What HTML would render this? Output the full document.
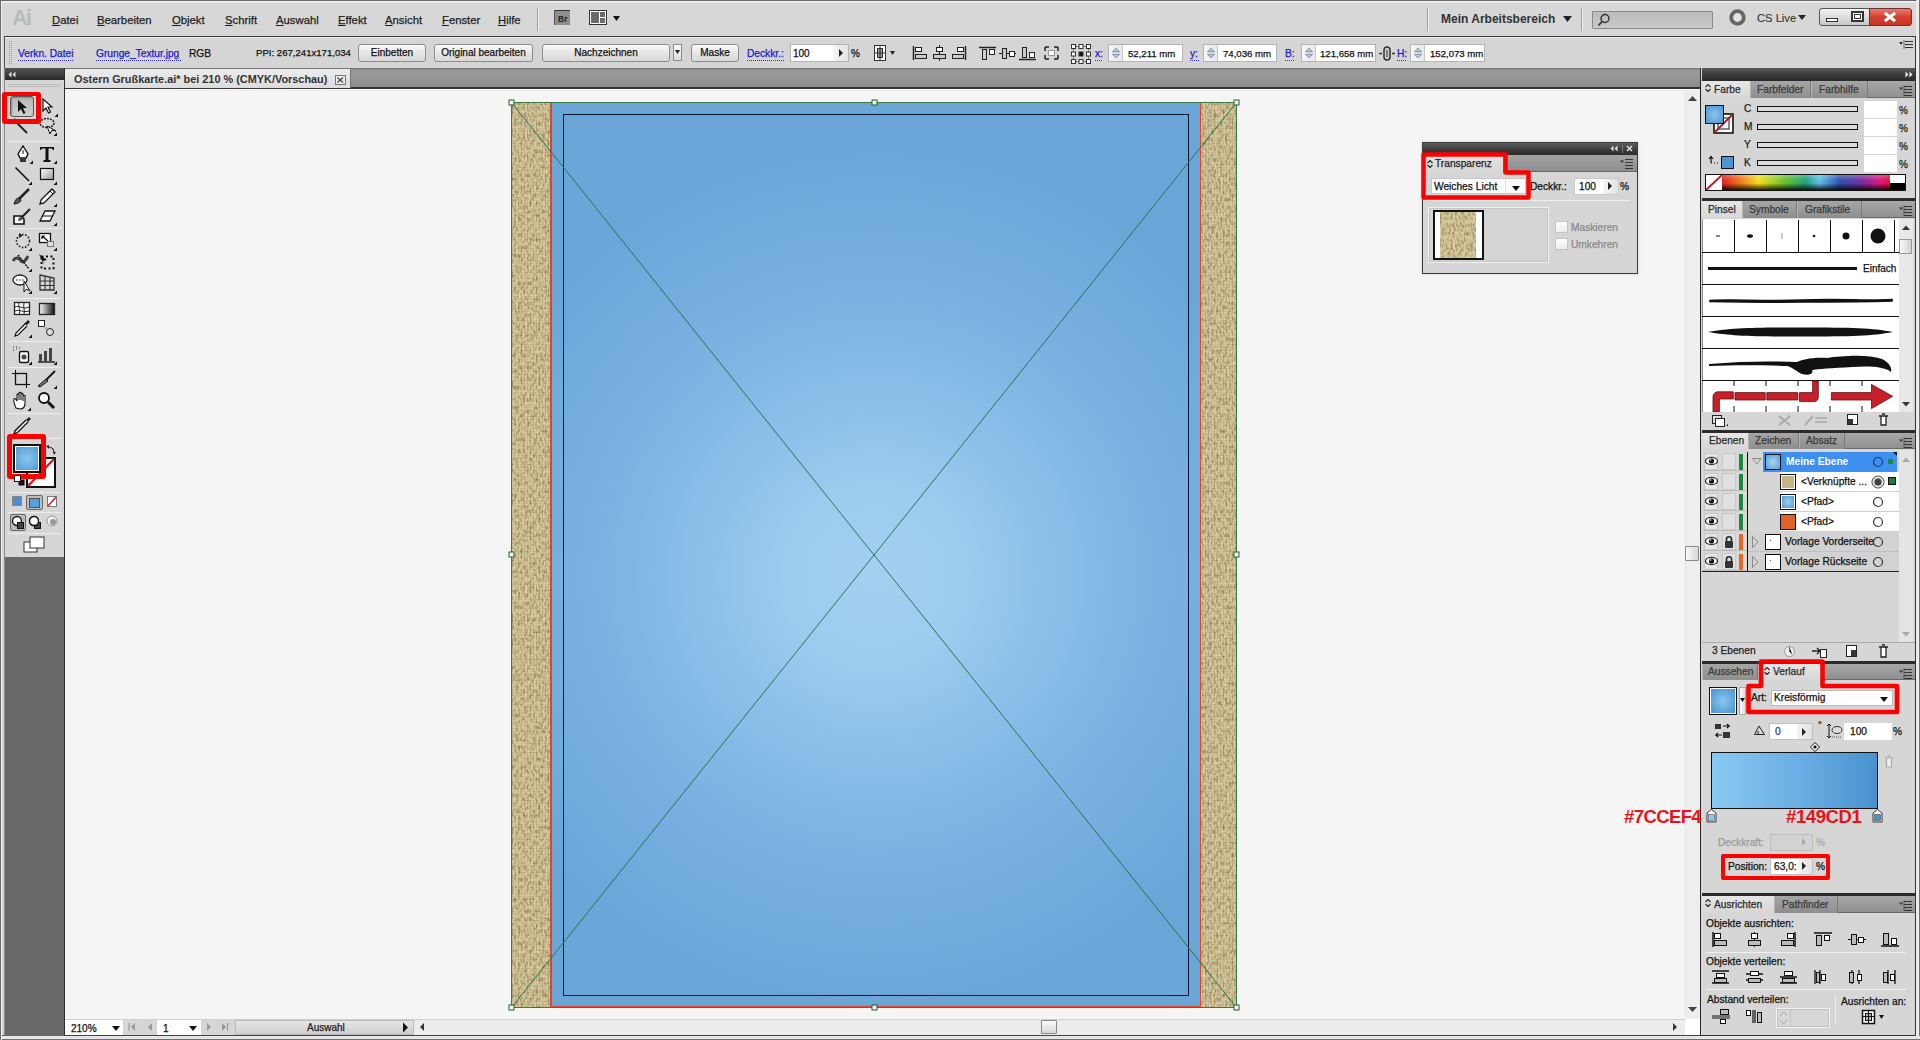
<!DOCTYPE html>
<html><head><meta charset="utf-8">
<style>
*{box-sizing:border-box;margin:0;padding:0}
html,body{width:1920px;height:1040px;overflow:hidden;background:#d6d6d6;font-family:"Liberation Sans",sans-serif;font-size:10px;color:#222}
.a{position:absolute}
.t{position:absolute;white-space:nowrap;line-height:1;-webkit-text-stroke:0.25px currentColor}
</style></head><body>

<div class="a" style="left:0px;top:0px;width:1920px;height:1040px;background:#d6d6d6"></div>
<div class="a" style="left:0px;top:0px;width:1px;height:1040px;background:#6a6a6a"></div>
<div class="a" style="left:1px;top:1px;width:1px;height:1039px;background:#f2f2f2"></div>
<div class="a" style="left:0px;top:0px;width:1920px;height:1px;background:#6a6a6a"></div>
<div class="a" style="left:1915px;top:0px;width:5px;height:1040px;background:#ececec;border-left:1px solid #333;border-right:1px solid #707070"></div>
<div class="a" style="left:2px;top:1px;width:1914px;height:35px;background:linear-gradient(#f2f2f2 0,#f2f2f2 1px,#d8d8d8 2px,#d6d6d6)"></div>
<div class="a" style="left:4px;top:36px;width:1912px;height:1px;background:#3c3c3c"></div>
<div class="a" style="left:4px;top:37px;width:1911px;height:31px;background:#d5d5d5;border-left:1px solid #555"></div>
<div class="a" style="left:5px;top:37px;width:1907px;height:1px;background:#f0f0f0"></div>
<svg class="a" style="left:9px;top:41px;" width="4" height="24" viewBox="0 0 4 24"><rect x="0" y="0" width="1" height="1" fill="#999"/><rect x="2" y="0" width="1" height="1" fill="#999"/><rect x="0" y="2" width="1" height="1" fill="#999"/><rect x="2" y="2" width="1" height="1" fill="#999"/><rect x="0" y="4" width="1" height="1" fill="#999"/><rect x="2" y="4" width="1" height="1" fill="#999"/><rect x="0" y="6" width="1" height="1" fill="#999"/><rect x="2" y="6" width="1" height="1" fill="#999"/><rect x="0" y="8" width="1" height="1" fill="#999"/><rect x="2" y="8" width="1" height="1" fill="#999"/><rect x="0" y="10" width="1" height="1" fill="#999"/><rect x="2" y="10" width="1" height="1" fill="#999"/><rect x="0" y="12" width="1" height="1" fill="#999"/><rect x="2" y="12" width="1" height="1" fill="#999"/><rect x="0" y="14" width="1" height="1" fill="#999"/><rect x="2" y="14" width="1" height="1" fill="#999"/><rect x="0" y="16" width="1" height="1" fill="#999"/><rect x="2" y="16" width="1" height="1" fill="#999"/><rect x="0" y="18" width="1" height="1" fill="#999"/><rect x="2" y="18" width="1" height="1" fill="#999"/><rect x="0" y="20" width="1" height="1" fill="#999"/><rect x="2" y="20" width="1" height="1" fill="#999"/><rect x="0" y="22" width="1" height="1" fill="#999"/><rect x="2" y="22" width="1" height="1" fill="#999"/></svg>
<div class="t" style="left:12px;top:8px;font-size:21.5px;color:#bababa;font-weight:bold;-webkit-text-stroke:0;letter-spacing:-1.5px;-webkit-text-stroke:0">Ai</div>
<div class="t" style="left:52px;top:15px;font-size:11.3px;color:#1e1e1e;font-weight:normal;"><u>D</u>atei</div>
<div class="t" style="left:97px;top:15px;font-size:11.3px;color:#1e1e1e;font-weight:normal;"><u>B</u>earbeiten</div>
<div class="t" style="left:172px;top:15px;font-size:11.3px;color:#1e1e1e;font-weight:normal;"><u>O</u>bjekt</div>
<div class="t" style="left:225px;top:15px;font-size:11.3px;color:#1e1e1e;font-weight:normal;"><u>S</u>chrift</div>
<div class="t" style="left:276px;top:15px;font-size:11.3px;color:#1e1e1e;font-weight:normal;"><u>A</u>uswahl</div>
<div class="t" style="left:338px;top:15px;font-size:11.3px;color:#1e1e1e;font-weight:normal;"><u>E</u>ffekt</div>
<div class="t" style="left:385px;top:15px;font-size:11.3px;color:#1e1e1e;font-weight:normal;"><u>A</u>nsicht</div>
<div class="t" style="left:442px;top:15px;font-size:11.3px;color:#1e1e1e;font-weight:normal;"><u>F</u>enster</div>
<div class="t" style="left:498px;top:15px;font-size:11.3px;color:#1e1e1e;font-weight:normal;"><u>H</u>ilfe</div>
<div class="a" style="left:537px;top:8px;width:2px;height:23px;background:#a0a0a0;border-right:1px solid #f0f0f0"></div>
<div class="a" style="left:554px;top:10px;width:16px;height:15px;background:#8e8e8e;border-top:1px solid #333;border-left:1px solid #555"></div>
<div class="t" style="left:558px;top:15px;font-size:8.5px;color:#222;font-weight:bold;-webkit-text-stroke:0;">Br</div>
<div class="a" style="left:589px;top:10px;width:18px;height:15px;background:#fff;border:1px solid #333"></div>
<div class="a" style="left:591px;top:12px;width:8px;height:11px;background:#6a6a6a"></div>
<div class="a" style="left:600px;top:12px;width:5px;height:5px;background:#6a6a6a"></div>
<div class="a" style="left:600px;top:18px;width:5px;height:5px;background:#6a6a6a"></div>
<svg class="a" style="left:613px;top:16px;" width="8" height="6" viewBox="0 0 8 6"><path d="M0 0H7L3.5 5Z" fill="#111"/></svg>
<div class="a" style="left:1427px;top:8px;width:2px;height:23px;background:#a0a0a0;border-right:1px solid #f0f0f0"></div>
<div class="t" style="left:1441px;top:13px;font-size:12px;color:#333;font-weight:bold;-webkit-text-stroke:0;">Mein Arbeitsbereich</div>
<svg class="a" style="left:1563px;top:16px;" width="9" height="6" viewBox="0 0 9 6"><path d="M0 0H9L4.5 6Z" fill="#222"/></svg>
<div class="a" style="left:1581px;top:8px;width:2px;height:23px;background:#a0a0a0;border-right:1px solid #f0f0f0"></div>
<div class="a" style="left:1592px;top:11px;width:121px;height:18px;background:linear-gradient(#bcbcbc,#c8c8c8);border:1px solid #8a8a8a;border-radius:1px"></div>
<svg class="a" style="left:1597px;top:13px;" width="14" height="14" viewBox="0 0 14 14"><circle cx="8" cy="5.5" r="4" stroke="#333" stroke-width="1.4" fill="none"/><path d="M5 8.5L1.5 12.5" stroke="#333" stroke-width="1.8"/></svg>
<svg class="a" style="left:1728px;top:8px;" width="20" height="20" viewBox="0 0 20 20"><circle cx="9.5" cy="9.5" r="6.3" stroke="#666" stroke-width="3.8" fill="#e4e4e4"/></svg>
<div class="t" style="left:1757px;top:13px;font-size:11.2px;color:#333;font-weight:normal;-webkit-text-stroke:0.1px #333">CS Live</div>
<svg class="a" style="left:1798px;top:15px;" width="9" height="6" viewBox="0 0 9 6"><path d="M0 0H8L4 5Z" fill="#222"/></svg>
<div class="a" style="left:1819px;top:8px;width:26px;height:18px;background:linear-gradient(#f2f2f2,#c8c8c8);border:1px solid #555;border-radius:3px 0 0 3px"></div>
<div class="a" style="left:1826px;top:18px;width:12px;height:4px;background:#fff;border:1px solid #333"></div>
<div class="a" style="left:1844px;top:8px;width:26px;height:18px;background:linear-gradient(#f2f2f2,#c8c8c8);border:1px solid #555;border-left:none"></div>
<div class="a" style="left:1851px;top:11px;width:13px;height:11px;background:#fff;border:2px solid #333"></div>
<div class="a" style="left:1854px;top:14px;width:7px;height:5px;background:#fff;border:1.5px solid #333"></div>
<div class="a" style="left:1869px;top:8px;width:43px;height:18px;background:linear-gradient(#e87a6e,#d44030 50%,#c53525);border:1px solid #6a3030;border-radius:0 3px 3px 0"></div>
<svg class="a" style="left:1883px;top:11px;" width="14" height="12" viewBox="0 0 14 12"><path d="M2 2L12 10M12 2L2 10" stroke="#fff" stroke-width="3"/><path d="M2 2L12 10M12 2L2 10" stroke="#fff" stroke-width="2.2"/></svg>
<div class="t" style="left:18px;top:49px;font-size:10.2px;color:#1a1acc;font-weight:normal;">Verkn. Datei</div>
<svg class="a" style="left:18px;top:60px;" width="55" height="1" viewBox="0 0 55 1"><rect x="0" y="0" width="1" height="1" fill="#3333cc"/><rect x="2" y="0" width="1" height="1" fill="#3333cc"/><rect x="4" y="0" width="1" height="1" fill="#3333cc"/><rect x="6" y="0" width="1" height="1" fill="#3333cc"/><rect x="8" y="0" width="1" height="1" fill="#3333cc"/><rect x="10" y="0" width="1" height="1" fill="#3333cc"/><rect x="12" y="0" width="1" height="1" fill="#3333cc"/><rect x="14" y="0" width="1" height="1" fill="#3333cc"/><rect x="16" y="0" width="1" height="1" fill="#3333cc"/><rect x="18" y="0" width="1" height="1" fill="#3333cc"/><rect x="20" y="0" width="1" height="1" fill="#3333cc"/><rect x="22" y="0" width="1" height="1" fill="#3333cc"/><rect x="24" y="0" width="1" height="1" fill="#3333cc"/><rect x="26" y="0" width="1" height="1" fill="#3333cc"/><rect x="28" y="0" width="1" height="1" fill="#3333cc"/><rect x="30" y="0" width="1" height="1" fill="#3333cc"/><rect x="32" y="0" width="1" height="1" fill="#3333cc"/><rect x="34" y="0" width="1" height="1" fill="#3333cc"/><rect x="36" y="0" width="1" height="1" fill="#3333cc"/><rect x="38" y="0" width="1" height="1" fill="#3333cc"/><rect x="40" y="0" width="1" height="1" fill="#3333cc"/><rect x="42" y="0" width="1" height="1" fill="#3333cc"/><rect x="44" y="0" width="1" height="1" fill="#3333cc"/><rect x="46" y="0" width="1" height="1" fill="#3333cc"/><rect x="48" y="0" width="1" height="1" fill="#3333cc"/><rect x="50" y="0" width="1" height="1" fill="#3333cc"/><rect x="52" y="0" width="1" height="1" fill="#3333cc"/><rect x="54" y="0" width="1" height="1" fill="#3333cc"/></svg>
<div class="t" style="left:96px;top:49px;font-size:10.2px;color:#1a1acc;font-weight:normal;">Grunge_Textur.jpg</div>
<svg class="a" style="left:96px;top:60px;" width="86" height="1" viewBox="0 0 86 1"><rect x="0" y="0" width="1" height="1" fill="#3333cc"/><rect x="2" y="0" width="1" height="1" fill="#3333cc"/><rect x="4" y="0" width="1" height="1" fill="#3333cc"/><rect x="6" y="0" width="1" height="1" fill="#3333cc"/><rect x="8" y="0" width="1" height="1" fill="#3333cc"/><rect x="10" y="0" width="1" height="1" fill="#3333cc"/><rect x="12" y="0" width="1" height="1" fill="#3333cc"/><rect x="14" y="0" width="1" height="1" fill="#3333cc"/><rect x="16" y="0" width="1" height="1" fill="#3333cc"/><rect x="18" y="0" width="1" height="1" fill="#3333cc"/><rect x="20" y="0" width="1" height="1" fill="#3333cc"/><rect x="22" y="0" width="1" height="1" fill="#3333cc"/><rect x="24" y="0" width="1" height="1" fill="#3333cc"/><rect x="26" y="0" width="1" height="1" fill="#3333cc"/><rect x="28" y="0" width="1" height="1" fill="#3333cc"/><rect x="30" y="0" width="1" height="1" fill="#3333cc"/><rect x="32" y="0" width="1" height="1" fill="#3333cc"/><rect x="34" y="0" width="1" height="1" fill="#3333cc"/><rect x="36" y="0" width="1" height="1" fill="#3333cc"/><rect x="38" y="0" width="1" height="1" fill="#3333cc"/><rect x="40" y="0" width="1" height="1" fill="#3333cc"/><rect x="42" y="0" width="1" height="1" fill="#3333cc"/><rect x="44" y="0" width="1" height="1" fill="#3333cc"/><rect x="46" y="0" width="1" height="1" fill="#3333cc"/><rect x="48" y="0" width="1" height="1" fill="#3333cc"/><rect x="50" y="0" width="1" height="1" fill="#3333cc"/><rect x="52" y="0" width="1" height="1" fill="#3333cc"/><rect x="54" y="0" width="1" height="1" fill="#3333cc"/><rect x="56" y="0" width="1" height="1" fill="#3333cc"/><rect x="58" y="0" width="1" height="1" fill="#3333cc"/><rect x="60" y="0" width="1" height="1" fill="#3333cc"/><rect x="62" y="0" width="1" height="1" fill="#3333cc"/><rect x="64" y="0" width="1" height="1" fill="#3333cc"/><rect x="66" y="0" width="1" height="1" fill="#3333cc"/><rect x="68" y="0" width="1" height="1" fill="#3333cc"/><rect x="70" y="0" width="1" height="1" fill="#3333cc"/><rect x="72" y="0" width="1" height="1" fill="#3333cc"/><rect x="74" y="0" width="1" height="1" fill="#3333cc"/><rect x="76" y="0" width="1" height="1" fill="#3333cc"/><rect x="78" y="0" width="1" height="1" fill="#3333cc"/><rect x="80" y="0" width="1" height="1" fill="#3333cc"/><rect x="82" y="0" width="1" height="1" fill="#3333cc"/><rect x="84" y="0" width="1" height="1" fill="#3333cc"/></svg>
<div class="t" style="left:189px;top:49px;font-size:10.2px;color:#111;font-weight:normal;">RGB</div>
<div class="t" style="left:256px;top:48px;font-size:9.6px;color:#111;font-weight:normal;">PPI: 267,241x171,034</div>
<div class="a" style="left:358px;top:44px;width:68px;height:18px;background:linear-gradient(#fbfbfb,#e6e6e6 50%,#d9d9d9);border:1px solid #8c8c8c;border-radius:3px"></div>
<div class="t" style="left:358px;top:44px;width:68px;height:18px;line-height:18px;text-align:center;font-size:10px;color:#111">Einbetten</div>
<div class="a" style="left:434px;top:44px;width:99px;height:18px;background:linear-gradient(#fbfbfb,#e6e6e6 50%,#d9d9d9);border:1px solid #8c8c8c;border-radius:3px"></div>
<div class="t" style="left:434px;top:44px;width:99px;height:18px;line-height:18px;text-align:center;font-size:10px;color:#111">Original bearbeiten</div>
<div class="a" style="left:542px;top:44px;width:128px;height:18px;background:linear-gradient(#fbfbfb,#e6e6e6 50%,#d9d9d9);border:1px solid #8c8c8c;border-radius:3px"></div>
<div class="t" style="left:542px;top:44px;width:128px;height:18px;line-height:18px;text-align:center;font-size:10px;color:#111">Nachzeichnen</div>
<div class="a" style="left:673px;top:44px;width:9px;height:17px;background:linear-gradient(#fafafa,#dcdcdc);border:1px solid #8c8c8c"></div>
<svg class="a" style="left:675px;top:50px;" width="6" height="5" viewBox="0 0 6 5"><path d="M0 0H5L2.5 4Z" fill="#222"/></svg>
<div class="a" style="left:691px;top:44px;width:48px;height:18px;background:linear-gradient(#fbfbfb,#e6e6e6 50%,#d9d9d9);border:1px solid #8c8c8c;border-radius:3px"></div>
<div class="t" style="left:691px;top:44px;width:48px;height:18px;line-height:18px;text-align:center;font-size:10px;color:#111">Maske</div>
<div class="t" style="left:747px;top:49px;font-size:10.2px;color:#1a1acc;font-weight:normal;">Deckkr.:</div>
<svg class="a" style="left:747px;top:60px;" width="38" height="1" viewBox="0 0 38 1"><rect x="0" y="0" width="1" height="1" fill="#3333cc"/><rect x="2" y="0" width="1" height="1" fill="#3333cc"/><rect x="4" y="0" width="1" height="1" fill="#3333cc"/><rect x="6" y="0" width="1" height="1" fill="#3333cc"/><rect x="8" y="0" width="1" height="1" fill="#3333cc"/><rect x="10" y="0" width="1" height="1" fill="#3333cc"/><rect x="12" y="0" width="1" height="1" fill="#3333cc"/><rect x="14" y="0" width="1" height="1" fill="#3333cc"/><rect x="16" y="0" width="1" height="1" fill="#3333cc"/><rect x="18" y="0" width="1" height="1" fill="#3333cc"/><rect x="20" y="0" width="1" height="1" fill="#3333cc"/><rect x="22" y="0" width="1" height="1" fill="#3333cc"/><rect x="24" y="0" width="1" height="1" fill="#3333cc"/><rect x="26" y="0" width="1" height="1" fill="#3333cc"/><rect x="28" y="0" width="1" height="1" fill="#3333cc"/><rect x="30" y="0" width="1" height="1" fill="#3333cc"/><rect x="32" y="0" width="1" height="1" fill="#3333cc"/><rect x="34" y="0" width="1" height="1" fill="#3333cc"/><rect x="36" y="0" width="1" height="1" fill="#3333cc"/></svg>
<div class="a" style="left:790px;top:44px;width:59px;height:18px;background:#fff;border:1px solid #b4b4b4"></div>
<div class="a" style="left:833px;top:45px;width:15px;height:16px;background:linear-gradient(90deg,#f4f4f4,#e4e4e4)"></div>
<svg class="a" style="left:839px;top:49px;" width="5" height="8" viewBox="0 0 5 8"><path d="M0 0L4 4L0 8Z" fill="#222"/></svg>
<div class="t" style="left:793px;top:49px;font-size:10px;color:#111;font-weight:normal;">100</div>
<div class="t" style="left:851px;top:49px;font-size:10px;color:#111;font-weight:normal;">%</div>
<svg class="a" style="left:873px;top:44px;" width="22" height="18" viewBox="0 0 22 18"><rect x="1.5" y="1.5" width="11" height="15" fill="#fff" stroke="#333"/><rect x="4.5" y="4.5" width="5" height="9" fill="#999" stroke="#333"/><path d="M1 9H13M7 1V17" stroke="#333"/><path d="M17 7H22L19.5 11Z" fill="#222"/></svg>
<svg class="a" style="left:912px;top:45px;" width="17" height="16" viewBox="0 0 17 16"><path d="M1.5 1V15" stroke="#222" stroke-width="1.5"/><rect x="3.5" y="2.5" width="6" height="4" fill="#fff" stroke="#222"/><rect x="3.5" y="9.5" width="11" height="4" fill="#ccc" stroke="#222"/></svg>
<svg class="a" style="left:932px;top:45px;" width="17" height="16" viewBox="0 0 17 16"><path d="M7.5 0V16" stroke="#222"/><rect x="4.5" y="2.5" width="6" height="4" fill="#fff" stroke="#222"/><rect x="1.5" y="9.5" width="12" height="4" fill="#ccc" stroke="#222"/></svg>
<svg class="a" style="left:952px;top:45px;" width="17" height="16" viewBox="0 0 17 16"><path d="M13.5 1V15" stroke="#222" stroke-width="1.5"/><rect x="5.5" y="2.5" width="6" height="4" fill="#fff" stroke="#222"/><rect x="0.5" y="9.5" width="11" height="4" fill="#ccc" stroke="#222"/></svg>
<svg class="a" style="left:979px;top:45px;" width="17" height="16" viewBox="0 0 17 16"><path d="M0 2.5H17" stroke="#222" stroke-width="1.5"/><rect x="3.5" y="4.5" width="4" height="10" fill="#ccc" stroke="#222"/><rect x="10.5" y="4.5" width="5" height="5" fill="#fff" stroke="#222"/></svg>
<svg class="a" style="left:999px;top:45px;" width="17" height="16" viewBox="0 0 17 16"><path d="M0 8.5H17" stroke="#222"/><rect x="3.5" y="3.5" width="4" height="10" fill="#ccc" stroke="#222"/><rect x="10.5" y="6.5" width="5" height="5" fill="#fff" stroke="#222"/></svg>
<svg class="a" style="left:1019px;top:45px;" width="17" height="16" viewBox="0 0 17 16"><path d="M0 14.5H17" stroke="#222" stroke-width="1.5"/><rect x="3.5" y="2.5" width="4" height="10" fill="#ccc" stroke="#222"/><rect x="10.5" y="7.5" width="5" height="5" fill="#fff" stroke="#222"/></svg>
<svg class="a" style="left:1044px;top:46px;" width="15" height="14" viewBox="0 0 15 14"><path d="M1 1h4M1 1v4M14 1h-4M14 1v4M1 13h4M1 13v-4M14 13h-4M14 13v-4" stroke="#222" stroke-width="1.5"/><rect x="4.5" y="4.5" width="6" height="5" fill="#fff" stroke="#999"/></svg>
<svg class="a" style="left:1071px;top:44px;" width="20" height="20" viewBox="0 0 20 20"><rect x="0.5" y="0.5" width="4" height="4" fill="#fff" stroke="#333"/><rect x="8.0" y="0.5" width="4" height="4" fill="#fff" stroke="#333"/><rect x="15.5" y="0.5" width="4" height="4" fill="#fff" stroke="#333"/><rect x="0.5" y="8.0" width="4" height="4" fill="#fff" stroke="#333"/><rect x="8.0" y="8.0" width="4" height="4" fill="#111" stroke="#333"/><rect x="15.5" y="8.0" width="4" height="4" fill="#fff" stroke="#333"/><rect x="0.5" y="15.5" width="4" height="4" fill="#fff" stroke="#333"/><rect x="8.0" y="15.5" width="4" height="4" fill="#fff" stroke="#333"/><rect x="15.5" y="15.5" width="4" height="4" fill="#fff" stroke="#333"/><path d="M5 2.5H8M12.5 2.5H15.5M5 17.5H8M12.5 17.5H15.5M2.5 5V8M2.5 12.5V15.5M17.5 5V8M17.5 12.5V15.5" stroke="#333" stroke-dasharray="1 1"/></svg>
<div class="t" style="left:1095px;top:49px;font-size:10.2px;color:#1a1acc;font-weight:normal;">x:</div>
<svg class="a" style="left:1095px;top:60px;" width="8" height="1" viewBox="0 0 8 1"><rect x="0" y="0" width="1" height="1" fill="#3333cc"/><rect x="2" y="0" width="1" height="1" fill="#3333cc"/><rect x="4" y="0" width="1" height="1" fill="#3333cc"/><rect x="6" y="0" width="1" height="1" fill="#3333cc"/></svg>
<div class="a" style="left:1108px;top:44px;width:75px;height:18px;background:#fff;border:1px solid #b4b4b4"></div>
<div class="a" style="left:1109px;top:45px;width:14px;height:16px;background:linear-gradient(90deg,#f6f6f6,#e8e8e8);border-right:1px solid #c8c8c8"></div>
<svg class="a" style="left:1112px;top:47px;" width="8" height="12" viewBox="0 0 8 12"><path d="M0.5 4.5L4 1L7.5 4.5Z" fill="#b8c8e0" stroke="#7080a0" stroke-width=".7"/><path d="M0.5 7.5L4 11L7.5 7.5Z" fill="#b8c8e0" stroke="#7080a0" stroke-width=".7"/><path d="M0 6H8" stroke="#999" stroke-width=".5"/></svg>
<div class="t" style="left:1128px;top:49px;font-size:9.6px;color:#111;font-weight:normal;">52,211 mm</div>
<div class="t" style="left:1190px;top:49px;font-size:10.2px;color:#1a1acc;font-weight:normal;">y:</div>
<svg class="a" style="left:1190px;top:60px;" width="9" height="1" viewBox="0 0 9 1"><rect x="0" y="0" width="1" height="1" fill="#3333cc"/><rect x="2" y="0" width="1" height="1" fill="#3333cc"/><rect x="4" y="0" width="1" height="1" fill="#3333cc"/><rect x="6" y="0" width="1" height="1" fill="#3333cc"/><rect x="8" y="0" width="1" height="1" fill="#3333cc"/></svg>
<div class="a" style="left:1203px;top:44px;width:74px;height:18px;background:#fff;border:1px solid #b4b4b4"></div>
<div class="a" style="left:1204px;top:45px;width:14px;height:16px;background:linear-gradient(90deg,#f6f6f6,#e8e8e8);border-right:1px solid #c8c8c8"></div>
<svg class="a" style="left:1207px;top:47px;" width="8" height="12" viewBox="0 0 8 12"><path d="M0.5 4.5L4 1L7.5 4.5Z" fill="#b8c8e0" stroke="#7080a0" stroke-width=".7"/><path d="M0.5 7.5L4 11L7.5 7.5Z" fill="#b8c8e0" stroke="#7080a0" stroke-width=".7"/><path d="M0 6H8" stroke="#999" stroke-width=".5"/></svg>
<div class="t" style="left:1223px;top:49px;font-size:9.6px;color:#111;font-weight:normal;">74,036 mm</div>
<div class="t" style="left:1285px;top:49px;font-size:10.2px;color:#1a1acc;font-weight:normal;">B:</div>
<svg class="a" style="left:1285px;top:60px;" width="9" height="1" viewBox="0 0 9 1"><rect x="0" y="0" width="1" height="1" fill="#3333cc"/><rect x="2" y="0" width="1" height="1" fill="#3333cc"/><rect x="4" y="0" width="1" height="1" fill="#3333cc"/><rect x="6" y="0" width="1" height="1" fill="#3333cc"/><rect x="8" y="0" width="1" height="1" fill="#3333cc"/></svg>
<div class="a" style="left:1301px;top:44px;width:75px;height:18px;background:#fff;border:1px solid #b4b4b4"></div>
<div class="a" style="left:1302px;top:45px;width:14px;height:16px;background:linear-gradient(90deg,#f6f6f6,#e8e8e8);border-right:1px solid #c8c8c8"></div>
<svg class="a" style="left:1305px;top:47px;" width="8" height="12" viewBox="0 0 8 12"><path d="M0.5 4.5L4 1L7.5 4.5Z" fill="#b8c8e0" stroke="#7080a0" stroke-width=".7"/><path d="M0.5 7.5L4 11L7.5 7.5Z" fill="#b8c8e0" stroke="#7080a0" stroke-width=".7"/><path d="M0 6H8" stroke="#999" stroke-width=".5"/></svg>
<div class="t" style="left:1320px;top:49px;font-size:9.6px;color:#111;font-weight:normal;">121,658 mm</div>
<svg class="a" style="left:1379px;top:46px;" width="17" height="15" viewBox="0 0 17 15"><path d="M0 7.5H3M13 7.5H16" stroke="#333" stroke-width="1.5"/><rect x="5" y="1" width="6" height="13" rx="3" fill="#ccc" stroke="#333" stroke-width="1.5"/><path d="M8 4V11" stroke="#333"/></svg>
<div class="t" style="left:1397px;top:49px;font-size:10.2px;color:#1a1acc;font-weight:normal;">H:</div>
<svg class="a" style="left:1397px;top:60px;" width="10" height="1" viewBox="0 0 10 1"><rect x="0" y="0" width="1" height="1" fill="#3333cc"/><rect x="2" y="0" width="1" height="1" fill="#3333cc"/><rect x="4" y="0" width="1" height="1" fill="#3333cc"/><rect x="6" y="0" width="1" height="1" fill="#3333cc"/><rect x="8" y="0" width="1" height="1" fill="#3333cc"/></svg>
<div class="a" style="left:1410px;top:44px;width:75px;height:18px;background:#fff;border:1px solid #b4b4b4"></div>
<div class="a" style="left:1411px;top:45px;width:14px;height:16px;background:linear-gradient(90deg,#f6f6f6,#e8e8e8);border-right:1px solid #c8c8c8"></div>
<svg class="a" style="left:1414px;top:47px;" width="8" height="12" viewBox="0 0 8 12"><path d="M0.5 4.5L4 1L7.5 4.5Z" fill="#b8c8e0" stroke="#7080a0" stroke-width=".7"/><path d="M0.5 7.5L4 11L7.5 7.5Z" fill="#b8c8e0" stroke="#7080a0" stroke-width=".7"/><path d="M0 6H8" stroke="#999" stroke-width=".5"/></svg>
<div class="t" style="left:1430px;top:49px;font-size:9.6px;color:#111;font-weight:normal;">152,073 mm</div>
<svg class="a" style="left:1899px;top:40px;" width="20" height="10" viewBox="0 0 20 10"><path d="M0 2H4L2 5Z" fill="#333"/><path d="M6 1.5H14M6 4.5H14M6 7.5H14" stroke="#333"/><path d="M5 0V9" stroke="#666"/></svg>
<div class="a" style="left:65px;top:68px;width:1635px;height:21px;background:linear-gradient(#6a6a6a 0,#979797 2px,#999 40%,#8a8a8a 100%);border-bottom:2px solid #333"></div>
<div class="a" style="left:65px;top:69px;width:286px;height:19px;background:linear-gradient(#ececec,#dcdcdc);border-right:1px solid #777"></div>
<div class="t" style="left:74px;top:74px;font-size:10.9px;color:#333;font-weight:bold;-webkit-text-stroke:0;">Ostern Grußkarte.ai* bei 210 % (CMYK/Vorschau)</div>
<div class="a" style="left:335px;top:75px;width:11px;height:10px;background:#eaeaea;border:1px solid #777"></div>
<svg class="a" style="left:337px;top:77px;" width="7" height="6" viewBox="0 0 7 6"><path d="M0.5 0.5L6 5.5M6 0.5L0.5 5.5" stroke="#444" stroke-width="1.1"/></svg>
<div class="a" style="left:65px;top:90px;width:1620px;height:929px;background:#f5f5f5"></div>
<div class="a" style="left:65px;top:89px;width:1635px;height:1px;background:#fdfdfd"></div>
<div class="a" style="left:65px;top:90px;width:1620px;height:1px;background:#ececec"></div>
<div class="a" style="left:1685px;top:90px;width:15px;height:929px;background:#eeeeee;border-left:1px solid #e6e6e6"></div>
<svg class="a" style="left:1687px;top:94px;" width="11" height="8" viewBox="0 0 11 8"><path d="M1 7L5.5 2L10 7Z" fill="#444"/></svg>
<div class="a" style="left:1685px;top:546px;width:14px;height:15px;background:linear-gradient(90deg,#fafafa,#d8d8d8);border:1px solid #888;border-radius:1px"></div>
<svg class="a" style="left:1687px;top:1006px;" width="11" height="8" viewBox="0 0 11 8"><path d="M1 1L5.5 6L10 1Z" fill="#444"/></svg>
<svg class="a" style="left:512px;top:102px" width="725" height="906">
<defs>
<filter id="tex" x="0" y="0" width="100%" height="100%" color-interpolation-filters="sRGB">
<feTurbulence type="fractalNoise" baseFrequency="0.45 0.25" numOctaves="3" seed="11" result="n"/>
<feColorMatrix type="matrix" in="n" result="c" values="0 0 0 0 0.5  0 0 0 0 0.42  0 0 0 0 0.26  0 0 0 -1.8 1.05"/>
<feComposite in="c" in2="SourceGraphic" operator="over"/>
</filter>
</defs>
<rect width="725" height="906" fill="#d6c99d" filter="url(#tex)"/>
</svg>
<div class="a" style="left:512px;top:102px;width:725px;height:906px;background:repeating-linear-gradient(90deg,rgba(70,60,20,.07) 0 1px,rgba(255,250,220,.04) 1px 3px),repeating-linear-gradient(0deg,rgba(70,60,20,.06) 0 1px,rgba(0,0,0,0) 1px 3px)"></div>
<div class="a" style="left:550px;top:102px;width:651px;height:906px;background:radial-gradient(circle 430px at 50% 52.5%,#a4d0f0 0px,#9ccbee 90px,#90c3eb 150px,#7fb7e4 240px,#76afe0 315px,#6ba6d8 430px);border:2px solid #e0452c;border-top:none;border-right-width:1px"></div>
<div class="a" style="left:563px;top:114px;width:626px;height:882px;border:1px solid #0a1230"></div>
<svg class="a" style="left:0;top:0" width="1920" height="1040">
<g stroke="#2a7352" stroke-width="1" fill="none">
<line x1="511.5" y1="102.5" x2="1236.5" y2="1007.5"/>
<line x1="1236.5" y1="102.5" x2="511.5" y2="1007.5"/>
<rect x="511.5" y="102.5" width="725" height="905" stroke="#3c7a45"/>
</g>
<g stroke="#2b5a33" stroke-width="1" fill="#eefaf0" transform="translate(0.5,0.5)"><rect x="508.5" y="99.5" width="5" height="5"/><rect x="871.5" y="99.5" width="5" height="5"/><rect x="1233.5" y="99.5" width="5" height="5"/><rect x="508.5" y="551.5" width="5" height="5"/><rect x="1233.5" y="551.5" width="5" height="5"/><rect x="508.5" y="1004.5" width="5" height="5"/><rect x="871.5" y="1004.5" width="5" height="5"/><rect x="1233.5" y="1004.5" width="5" height="5"/></g>
</svg>
<div class="a" style="left:65px;top:1019px;width:1620px;height:17px;background:#e4e4e4;border-top:1px solid #cfcfcf"></div>
<div class="a" style="left:65px;top:1020px;width:58px;height:15px;background:#fff"></div>
<div class="t" style="left:71px;top:1024px;font-size:10px;color:#111;font-weight:normal;">210%</div>
<svg class="a" style="left:112px;top:1026px;" width="9" height="6" viewBox="0 0 9 6"><path d="M0 0H8L4 5Z" fill="#111"/></svg>
<div class="a" style="left:123px;top:1020px;width:112px;height:15px;background:#d6d6d6"></div>
<svg class="a" style="left:128px;top:1022px;" width="8" height="10" viewBox="0 0 8 10"><path d="M1 1V9" stroke="#999" stroke-width="1.2"/><path d="M7 1L3 5L7 9Z" fill="#999"/></svg>
<svg class="a" style="left:146px;top:1022px;" width="7" height="10" viewBox="0 0 7 10"><path d="M6 1L2 5L6 9Z" fill="#999"/></svg>
<div class="a" style="left:157px;top:1020px;width:44px;height:15px;background:#fff"></div>
<div class="t" style="left:163px;top:1024px;font-size:10px;color:#111;font-weight:normal;">1</div>
<svg class="a" style="left:189px;top:1026px;" width="9" height="6" viewBox="0 0 9 6"><path d="M0 0H8L4 5Z" fill="#111"/></svg>
<svg class="a" style="left:206px;top:1022px;" width="7" height="10" viewBox="0 0 7 10"><path d="M1 1L5 5L1 9Z" fill="#999"/></svg>
<svg class="a" style="left:221px;top:1022px;" width="8" height="10" viewBox="0 0 8 10"><path d="M6.5 1V9" stroke="#999" stroke-width="1.2"/><path d="M1 1L5 5L1 9Z" fill="#999"/></svg>
<div class="a" style="left:235px;top:1020px;width:179px;height:15px;background:linear-gradient(#e6e6e6,#cfcfcf);border:1px solid #bbb"></div>
<div class="t" style="left:307px;top:1023px;font-size:10px;color:#222;font-weight:normal;">Auswahl</div>
<svg class="a" style="left:402px;top:1022px;" width="7" height="11" viewBox="0 0 7 11"><path d="M1 0.5L6 5.5L1 10.5Z" fill="#111"/></svg>
<div class="a" style="left:414px;top:1020px;width:1271px;height:15px;background:#ececec"></div>
<svg class="a" style="left:419px;top:1022px;" width="6" height="10" viewBox="0 0 6 10"><path d="M5 1L1 5L5 9Z" fill="#333"/></svg>
<div class="a" style="left:1041px;top:1020px;width:16px;height:14px;background:linear-gradient(#fafafa,#d8d8d8);border:1px solid #888;border-radius:1px"></div>
<svg class="a" style="left:1672px;top:1022px;" width="6" height="10" viewBox="0 0 6 10"><path d="M1 1L5 5L1 9Z" fill="#333"/></svg>
<div class="a" style="left:1685px;top:1019px;width:15px;height:17px;background:#fff"></div>
<div class="a" style="left:2px;top:1035px;width:1914px;height:1px;background:#444"></div>
<div class="a" style="left:2px;top:1036px;width:1918px;height:4px;background:#e6e6e6;border-bottom:1px solid #707070"></div>
<div class="a" style="left:4px;top:68px;width:61px;height:968px;background:#d6d6d6;border-left:1px solid #8a8a8a;border-right:1px solid #2e2e2e"></div>
<div class="a" style="left:5px;top:68px;width:59px;height:12px;background:linear-gradient(#555,#3a3a3a 60%,#2a2a2a)"></div>
<svg class="a" style="left:8px;top:71px;" width="8" height="7" viewBox="0 0 8 7"><path d="M3.5 0.5L0.5 3.5L3.5 6.5ZM7.5 0.5L4.5 3.5L7.5 6.5Z" fill="#ddd"/></svg>
<div class="a" style="left:8px;top:84px;width:53px;height:1px;background:#bdbdbd"></div>
<div class="a" style="left:8px;top:86px;width:53px;height:1px;background:#bdbdbd"></div>
<div class="a" style="left:5px;top:557px;width:59px;height:479px;background:#686868"></div>
<div class="a" style="left:8px;top:141px;width:53px;height:1px;background:#b0b0b0;border-bottom:1px solid #eee"></div>
<div class="a" style="left:8px;top:228px;width:53px;height:1px;background:#b0b0b0;border-bottom:1px solid #eee"></div>
<div class="a" style="left:8px;top:298px;width:53px;height:1px;background:#b0b0b0;border-bottom:1px solid #eee"></div>
<div class="a" style="left:8px;top:341px;width:53px;height:1px;background:#b0b0b0;border-bottom:1px solid #eee"></div>
<div class="a" style="left:8px;top:367px;width:53px;height:1px;background:#b0b0b0;border-bottom:1px solid #eee"></div>
<div class="a" style="left:8px;top:413px;width:53px;height:1px;background:#b0b0b0;border-bottom:1px solid #eee"></div>
<div class="a" style="left:8px;top:438px;width:53px;height:1px;background:#b0b0b0;border-bottom:1px solid #eee"></div>
<div class="a" style="left:8px;top:492px;width:53px;height:1px;background:#b0b0b0;border-bottom:1px solid #eee"></div>
<div class="a" style="left:8px;top:512px;width:53px;height:1px;background:#b0b0b0;border-bottom:1px solid #eee"></div>
<div class="a" style="left:8px;top:533px;width:53px;height:1px;background:#b0b0b0;border-bottom:1px solid #eee"></div>
<div class="a" style="left:10px;top:96px;width:24px;height:21px;background:linear-gradient(#b8b8b8,#cfcfcf);border:1px solid #555;border-radius:3px;box-shadow:inset 1px 1px 2px #888"></div>
<svg class="a" style="left:16px;top:99px;" width="12" height="16" viewBox="0 0 12 16"><path d="M2 1V13L5 10L7.5 15L9.5 14L7 9H11Z" fill="#111"/></svg>
<svg class="a" style="left:41px;top:97px;" width="17" height="20" viewBox="0 0 17 20"><path d="M2 2V14L5 11L7.5 16L9.5 15L7 10H11Z" fill="#fff" stroke="#111" stroke-width="1.2"/><path d="M17 20h-3.5l3.5-3.5Z" fill="#111"/></svg>
<svg class="a" style="left:12px;top:118px;" width="19" height="18" viewBox="0 0 19 18"><path d="M3 3L15 15" stroke="#222" stroke-width="2"/><path d="M3 0V5M0 3H6" stroke="#555"/></svg>
<svg class="a" style="left:38px;top:117px;" width="19" height="19" viewBox="0 0 19 19"><ellipse cx="9" cy="6" rx="7" ry="4.5" fill="none" stroke="#222" stroke-width="1.5" stroke-dasharray="2 1"/><path d="M9 9L12 17L14 13L18 14Z" fill="#fff" stroke="#111"/><path d="M19 19h-3.5l3.5-3.5Z" fill="#111"/></svg>
<svg class="a" style="left:16px;top:145px;" width="17" height="19" viewBox="0 0 17 19"><path d="M7 1L12 9L10 13H4L2 9Z" fill="#fff" stroke="#111" stroke-width="1.4"/><path d="M7 5V9" stroke="#111"/><path d="M4 14H10V17H4Z" fill="#333"/><path d="M17 19h-3.5l3.5-3.5Z" fill="#111"/></svg>
<svg class="a" style="left:38px;top:145px;" width="19" height="19" viewBox="0 0 19 19"><path d="M2 2H16V5H15L14 3.5H10.5V15H12.5V17H5.5V15H7.5V3.5H4L3 5H2Z" fill="#111"/><path d="M19 19h-3.5l3.5-3.5Z" fill="#111"/></svg>
<svg class="a" style="left:14px;top:166px;" width="18" height="19" viewBox="0 0 18 19"><path d="M1.5 1.5L15 15" stroke="#111" stroke-width="1.6"/><path d="M18 19h-3.5l3.5-3.5Z" fill="#111"/></svg>
<svg class="a" style="left:38px;top:166px;" width="19" height="19" viewBox="0 0 19 19"><rect x="2.5" y="2.5" width="13" height="11" fill="url(#gr1)" stroke="#111" stroke-width="1.2"/><defs><linearGradient id="gr1" x1="0" y1="0" x2="1" y2="1"><stop offset="0" stop-color="#fff"/><stop offset="1" stop-color="#999"/></linearGradient></defs><path d="M19 19h-3.5l3.5-3.5Z" fill="#111"/></svg>
<svg class="a" style="left:13px;top:188px;" width="18" height="18" viewBox="0 0 18 18"><path d="M16 1L6 11" stroke="#222" stroke-width="2.5"/><path d="M6 10C3 10 2 13 1 16C4 16 8 14 8 12Z" fill="#555" stroke="#111"/></svg>
<svg class="a" style="left:38px;top:188px;" width="19" height="19" viewBox="0 0 19 19"><path d="M14 1L17 4L6 15L2 16L3 12Z" fill="#fff" stroke="#111" stroke-width="1.3"/><path d="M12 3L15 6" stroke="#111"/><path d="M19 19h-3.5l3.5-3.5Z" fill="#111"/></svg>
<svg class="a" style="left:12px;top:208px;" width="20" height="18" viewBox="0 0 20 18"><path d="M2 8H9L12 11V16H2Z" fill="#fff" stroke="#111" stroke-width="1.6"/><path d="M18 1L9 10" stroke="#222" stroke-width="2.2"/><path d="M9 9C7 9 6 11 6 13C8 13 10 12 11 11Z" fill="#555"/></svg>
<svg class="a" style="left:38px;top:207px;" width="19" height="19" viewBox="0 0 19 19"><path d="M7 4H17L12 14H2Z" fill="#fff" stroke="#111" stroke-width="1.3"/><path d="M4.5 9H14.5" stroke="#111"/><path d="M2 14L4.5 9" fill="#666"/><path d="M19 19h-3.5l3.5-3.5Z" fill="#111"/></svg>
<svg class="a" style="left:15px;top:232px;" width="17" height="19" viewBox="0 0 17 19"><circle cx="8" cy="9" r="6.5" fill="none" stroke="#222" stroke-width="1.6" stroke-dasharray="1.6 1.6"/><path d="M4 1L8 3.5L4 6Z" fill="#222"/><path d="M17 19h-3.5l3.5-3.5Z" fill="#111"/></svg>
<svg class="a" style="left:38px;top:232px;" width="19" height="19" viewBox="0 0 19 19"><rect x="1.5" y="1.5" width="11" height="9" fill="#fff" stroke="#111" stroke-width="1.3"/><rect x="9.5" y="9.5" width="6" height="5" fill="#ddd" stroke="#777"/><path d="M4 4L10 9M4 4V7M4 4H7" stroke="#111" stroke-width="1.2"/><path d="M19 19h-3.5l3.5-3.5Z" fill="#111"/></svg>
<svg class="a" style="left:12px;top:252px;" width="20" height="20" viewBox="0 0 20 20"><path d="M1 9C4 4 7 6 9 9C11 12 14 8 16 4" fill="none" stroke="#444" stroke-width="3"/><path d="M6 3L17 17" stroke="#111" stroke-width="1.5" stroke-dasharray="2 1"/><path d="M20 20h-3.5l3.5-3.5Z" fill="#111"/></svg>
<svg class="a" style="left:38px;top:253px;" width="19" height="19" viewBox="0 0 19 19"><path d="M3.5 3.5H15.5V15.5H3.5Z" fill="none" stroke="#111" stroke-width="2" stroke-dasharray="2 2.5"/><path d="M1 1L9 7L5 8L6 12Z" fill="#111"/></svg>
<svg class="a" style="left:12px;top:273px;" width="20" height="21" viewBox="0 0 20 21"><ellipse cx="8" cy="7" rx="7" ry="5" fill="#fff" stroke="#222" stroke-width="1.3"/><path d="M4 7H12" stroke="#111" stroke-dasharray="1.5 1.5"/><path d="M12 8L12 19L14.5 16L18 18Z" fill="#fff" stroke="#111"/><path d="M20 21h-3.5l3.5-3.5Z" fill="#111"/></svg>
<svg class="a" style="left:38px;top:273px;" width="19" height="21" viewBox="0 0 19 21"><path d="M2 2L16 5V17H2Z" fill="none" stroke="#333" stroke-width="1.3"/><path d="M7 3V17M12 4V17M2 8H16M2 12.5H16" stroke="#333" stroke-width="1.1"/><path d="M19 21h-3.5l3.5-3.5Z" fill="#111"/></svg>
<svg class="a" style="left:13px;top:301px;" width="19" height="16" viewBox="0 0 19 16"><rect x="1.5" y="1.5" width="15" height="12" fill="#fff" stroke="#222" stroke-width="1.3"/><path d="M2 6C6 4 10 9 16 6M2 10C7 8 10 12 16 10M6 2C5 6 8 9 6 14M11 2C10 6 12 9 11 14" fill="none" stroke="#222"/></svg>
<svg class="a" style="left:38px;top:301px;" width="19" height="16" viewBox="0 0 19 16"><rect x="1.5" y="2.5" width="15" height="11" fill="url(#gr2)" stroke="#222" stroke-width="1.3"/><defs><linearGradient id="gr2"><stop offset="0" stop-color="#fff"/><stop offset="1" stop-color="#111"/></linearGradient></defs></svg>
<svg class="a" style="left:13px;top:319px;" width="19" height="19" viewBox="0 0 19 19"><path d="M15 1L17 3L13 7L11 5Z" fill="#222"/><path d="M12 5L3 14L2 17L5 16L14 7" fill="#fff" stroke="#111" stroke-width="1.2"/><path d="M19 19h-3.5l3.5-3.5Z" fill="#111"/></svg>
<svg class="a" style="left:37px;top:319px;" width="19" height="19" viewBox="0 0 19 19"><rect x="1.5" y="1.5" width="6" height="6" fill="#fff" stroke="#222"/><circle cx="13" cy="13" r="3.5" fill="#ddd" stroke="#222"/><path d="M7 7L11 11" stroke="#555" stroke-dasharray="1 1.5" stroke-width="1.5"/></svg>
<svg class="a" style="left:11px;top:345px;" width="21" height="20" viewBox="0 0 21 20"><path d="M2 2h1M5 2h1M2 5h1M5 4h1M8 3h1" stroke="#222"/><rect x="8.5" y="6.5" width="9" height="11" rx="1.5" fill="#fff" stroke="#111" stroke-width="1.4"/><circle cx="13" cy="12" r="2.5" fill="#444"/><path d="M21 20h-3.5l3.5-3.5Z" fill="#111"/></svg>
<svg class="a" style="left:36px;top:345px;" width="21" height="20" viewBox="0 0 21 20"><path d="M2 17H19" stroke="#222" stroke-width="1.5"/><rect x="3" y="9" width="3" height="8" fill="#444"/><rect x="8" y="6" width="3" height="11" fill="#444"/><rect x="13" y="3" width="3" height="14" fill="#444"/><path d="M21 20h-3.5l3.5-3.5Z" fill="#111"/></svg>
<svg class="a" style="left:12px;top:370px;" width="18" height="18" viewBox="0 0 18 18"><rect x="3.5" y="3.5" width="11" height="11" fill="none" stroke="#111" stroke-width="1.3"/><path d="M3.5 0V3.5M0 3.5H3.5M14.5 14.5V18M14.5 14.5H18" stroke="#111"/></svg>
<svg class="a" style="left:36px;top:370px;" width="21" height="19" viewBox="0 0 21 19"><path d="M19 1L9 11" stroke="#111" stroke-width="1.8"/><path d="M10 9L2 16L4 17L12 11Z" fill="#777" stroke="#111"/><path d="M21 19h-3.5l3.5-3.5Z" fill="#111"/></svg>
<svg class="a" style="left:12px;top:391px;" width="19" height="20" viewBox="0 0 19 20"><path d="M4 17C2 12 1 10 2 8C3 7 4 8 5 10V4C5 2.5 7 2.5 7 4V9V2C7 1 9 1 9 2V9V3C9 2 11 2 11 3V10V5C11 4 13 4 13 5V12C13 16 11 18 8 18Z" fill="#fff" stroke="#111" stroke-width="1.1"/><path d="M19 20h-3.5l3.5-3.5Z" fill="#111"/></svg>
<svg class="a" style="left:37px;top:391px;" width="19" height="19" viewBox="0 0 19 19"><circle cx="7" cy="7" r="5" fill="#fff" stroke="#111" stroke-width="1.8"/><path d="M11 11L17 17" stroke="#111" stroke-width="3"/></svg>
<svg class="a" style="left:12px;top:415px;" width="20" height="20" viewBox="0 0 20 20"><path d="M17 2L19 4L15 8L13 6Z" fill="#222"/><path d="M14 5L3 16L2 19L5 18L16 7" fill="#fff" stroke="#111" stroke-width="1.4"/></svg>
<div class="a" style="left:46px;top:447px;width:9px;height:9px;"></div>
<svg class="a" style="left:46px;top:445px;" width="11" height="11" viewBox="0 0 11 11"><path d="M2 2Q8 2 8 8" fill="none" stroke="#222" stroke-width="1.2"/><path d="M0 1L3 0V4ZM7 7H10L8 10Z" fill="#222"/></svg>
<svg class="a" style="left:26px;top:457px;" width="31" height="31" viewBox="0 0 31 31"><rect x="1" y="1" width="28" height="29" fill="#fff" stroke="#111" stroke-width="2"/><path d="M2 29L28 2" stroke="#d0202a" stroke-width="2.5"/></svg>
<div class="a" style="left:13px;top:444px;width:28px;height:29px;background:radial-gradient(circle at 50% 50%,#8cc6ee,#4b97d4);border:2px solid #111;box-shadow:inset 0 0 0 1px #fff"></div>
<div class="a" style="left:7px;top:434px;width:39px;height:45px;border:5px solid #f00;border-radius:3px"></div>
<svg class="a" style="left:14px;top:475px;" width="11" height="11" viewBox="0 0 11 11"><rect x="4.5" y="4.5" width="6" height="6" fill="#111"/><rect x="0.5" y="0.5" width="6" height="6" fill="#fff" stroke="#111"/></svg>
<div class="a" style="left:12px;top:496px;width:10px;height:10px;background:#4a90d0;border:1px solid #888"></div>
<div class="a" style="left:26px;top:495px;width:17px;height:15px;background:#bdbdbd;border:1px solid #666;border-radius:2px"></div>
<div class="a" style="left:29px;top:498px;width:11px;height:10px;background:#5aa0d8;border:1px solid #555"></div>
<svg class="a" style="left:47px;top:496px;" width="10" height="11" viewBox="0 0 10 11"><rect x="0.5" y="0.5" width="9" height="10" fill="#fff" stroke="#777"/><path d="M1 10L9 1" stroke="#d0202a" stroke-width="1.5"/></svg>
<div class="a" style="left:10px;top:514px;width:16px;height:17px;background:#bbb;border:1px solid #666;border-radius:2px"></div>
<svg class="a" style="left:11px;top:515px;" width="14" height="15" viewBox="0 0 14 15"><circle cx="6" cy="6" r="4.5" fill="#fff" stroke="#111" stroke-width="1.3"/><rect x="6.5" y="7.5" width="6" height="6" fill="#444" stroke="#111"/></svg>
<svg class="a" style="left:28px;top:515px;" width="14" height="15" viewBox="0 0 14 15"><circle cx="6" cy="6" r="4.5" fill="#fff" stroke="#111" stroke-width="1.3"/><rect x="6.5" y="7.5" width="6" height="6" fill="#444" stroke="#111"/><circle cx="6" cy="6" r="4.5" fill="#fff" stroke="#111" stroke-width="1.3"/></svg>
<svg class="a" style="left:46px;top:515px;" width="12" height="12" viewBox="0 0 12 12"><circle cx="6" cy="6" r="5" fill="#eee" stroke="#999"/><circle cx="7" cy="7" r="3" fill="#999"/></svg>
<svg class="a" style="left:23px;top:536px;" width="22" height="17" viewBox="0 0 22 17"><rect x="1" y="6" width="13" height="10" fill="#fff" stroke="#333"/><rect x="7" y="1" width="14" height="11" fill="#fff" stroke="#333"/></svg>
<div class="a" style="left:2px;top:92px;width:39px;height:32px;border:5px solid #f00;border-top-width:4px;border-bottom-width:5px;border-radius:3px"></div>
<div class="a" style="left:1700px;top:68px;width:215px;height:968px;background:#d6d6d6"></div>
<div class="a" style="left:1700px;top:68px;width:1px;height:968px;background:#262626"></div>
<div class="a" style="left:1702px;top:68px;width:213px;height:13px;background:linear-gradient(#5a5a5a,#3c3c3c 50%,#2a2a2a)"></div>
<svg class="a" style="left:1905px;top:71px;" width="9" height="8" viewBox="0 0 9 8"><path d="M0.5 0.5L3.5 3.5L0.5 6.5ZM4.5 0.5L7.5 3.5L4.5 6.5Z" fill="#eee"/></svg>
<div class="a" style="left:1702px;top:81px;width:213px;height:17px;background:linear-gradient(#a8a8a8,#909090);border-bottom:1px solid #6a6a6a"></div>
<div class="a" style="left:1702px;top:81px;width:48px;height:18px;background:linear-gradient(#e6e6e6,#d6d6d6)"></div>
<svg class="a" style="left:1705px;top:84px;" width="6" height="8" viewBox="0 0 6 8"><path d="M0.5 3L3 0.5L5.5 3M0.5 5L3 7.5L5.5 5" fill="none" stroke="#333" stroke-width="1.3"/></svg>
<div class="t" style="left:1714px;top:85px;font-size:10.2px;color:#2a2a2a;font-weight:normal;">Farbe</div>
<div class="a" style="left:1750px;top:81px;width:61px;height:17px;background:linear-gradient(#a6a6a6,#8e8e8e);border-right:1px solid #7a7a7a;border-left:1px solid #b4b4b4"></div>
<div class="t" style="left:1757px;top:85px;font-size:10.2px;color:#3a3a3a;font-weight:normal;">Farbfelder</div>
<div class="a" style="left:1811px;top:81px;width:57px;height:17px;background:linear-gradient(#a6a6a6,#8e8e8e);border-right:1px solid #7a7a7a;border-left:1px solid #b4b4b4"></div>
<div class="t" style="left:1819px;top:85px;font-size:10.2px;color:#3a3a3a;font-weight:normal;">Farbhilfe</div>
<svg class="a" style="left:1899px;top:85px;" width="14" height="12" viewBox="0 0 14 12"><path d="M0 2.5H4L2 5Z" fill="#333"/><path d="M5 1.5H13M5 4.5H13M5 7.5H13M5 10.5H13" stroke="#333" stroke-width="1"/><path d="M5 0.5V11" stroke="#555"/></svg>
<svg class="a" style="left:1705px;top:104px;" width="30" height="30" viewBox="0 0 30 30"><rect x="9" y="10" width="19" height="19" fill="#fff" stroke="#111" stroke-width="1.6"/><rect x="13" y="14" width="11" height="11" fill="none" stroke="#111"/><path d="M9.5 28.5L27.5 10.5" stroke="#c01525" stroke-width="2"/></svg>
<div class="a" style="left:1705px;top:105px;width:19px;height:19px;background:radial-gradient(circle at 50% 50%,#8cc6ee,#4a96d4);border:1.5px solid #111"></div>
<svg class="a" style="left:1708px;top:155px;" width="12" height="9" viewBox="0 0 12 9"><path d="M3 8V2M1 4L3 1.5L5 4" stroke="#111" stroke-width="1.2" fill="none"/><path d="M3 8H4M6 8H7M9 8H10" stroke="#111"/></svg>
<div class="a" style="left:1721px;top:156px;width:13px;height:13px;background:#4a96d4;border:1px solid #111"></div>
<div class="t" style="left:1744px;top:104px;font-size:10.2px;color:#222;font-weight:normal;">C</div>
<div class="a" style="left:1757px;top:106px;width:101px;height:6px;background:#ddd;border:1px solid #111"></div>
<div class="a" style="left:1864px;top:101px;width:33px;height:17px;background:#fff"></div>
<div class="t" style="left:1899px;top:106px;font-size:10px;color:#222;font-weight:normal;">%</div>
<div class="t" style="left:1744px;top:122px;font-size:10.2px;color:#222;font-weight:normal;">M</div>
<div class="a" style="left:1757px;top:124px;width:101px;height:6px;background:#ddd;border:1px solid #111"></div>
<div class="a" style="left:1864px;top:119px;width:33px;height:17px;background:#fff"></div>
<div class="t" style="left:1899px;top:124px;font-size:10px;color:#222;font-weight:normal;">%</div>
<div class="t" style="left:1744px;top:140px;font-size:10.2px;color:#222;font-weight:normal;">Y</div>
<div class="a" style="left:1757px;top:142px;width:101px;height:6px;background:#ddd;border:1px solid #111"></div>
<div class="a" style="left:1864px;top:137px;width:33px;height:17px;background:#fff"></div>
<div class="t" style="left:1899px;top:142px;font-size:10px;color:#222;font-weight:normal;">%</div>
<div class="t" style="left:1744px;top:158px;font-size:10.2px;color:#222;font-weight:normal;">K</div>
<div class="a" style="left:1757px;top:160px;width:101px;height:6px;background:#ddd;border:1px solid #111"></div>
<div class="a" style="left:1864px;top:155px;width:33px;height:17px;background:#fff"></div>
<div class="t" style="left:1899px;top:160px;font-size:10px;color:#222;font-weight:normal;">%</div>
<div class="a" style="left:1705px;top:174px;width:201px;height:17px;background:#fff;border:1px solid #111"></div>
<svg class="a" style="left:1706px;top:175px;" width="16" height="15" viewBox="0 0 16 15"><rect width="16" height="15" fill="#fff"/><path d="M0 15L16 0" stroke="#c01525" stroke-width="2"/></svg>
<div class="a" style="left:1722px;top:175px;width:168px;height:15px;background:linear-gradient(90deg,#e02020,#f07020 10%,#f0e020 22%,#60c030 38%,#20a080 50%,#60c0e8 58%,#3050b0 70%,#7030a0 82%,#e01880 94%,#e01030)"></div>
<div class="a" style="left:1722px;top:175px;width:168px;height:15px;background:linear-gradient(rgba(255,255,255,.25),rgba(255,255,255,0) 40%,rgba(0,0,0,0) 55%,rgba(0,0,0,.85))"></div>
<div class="a" style="left:1890px;top:175px;width:15px;height:8px;background:#fff"></div>
<div class="a" style="left:1890px;top:183px;width:15px;height:7px;background:#000"></div>
<div class="a" style="left:1702px;top:198px;width:213px;height:3px;background:#2c2c2c"></div>
<div class="a" style="left:1702px;top:201px;width:213px;height:17px;background:linear-gradient(#a8a8a8,#909090);border-bottom:1px solid #6a6a6a"></div>
<div class="a" style="left:1702px;top:201px;width:40px;height:18px;background:linear-gradient(#e6e6e6,#d6d6d6)"></div>
<div class="t" style="left:1708px;top:205px;font-size:10.2px;color:#2a2a2a;font-weight:normal;">Pinsel</div>
<div class="a" style="left:1742px;top:201px;width:55px;height:17px;background:linear-gradient(#a6a6a6,#8e8e8e);border-right:1px solid #7a7a7a;border-left:1px solid #b4b4b4"></div>
<div class="t" style="left:1749px;top:205px;font-size:10.2px;color:#3a3a3a;font-weight:normal;">Symbole</div>
<div class="a" style="left:1797px;top:201px;width:65px;height:17px;background:linear-gradient(#a6a6a6,#8e8e8e);border-right:1px solid #7a7a7a;border-left:1px solid #b4b4b4"></div>
<div class="t" style="left:1805px;top:205px;font-size:10.2px;color:#3a3a3a;font-weight:normal;">Grafikstile</div>
<svg class="a" style="left:1899px;top:205px;" width="14" height="12" viewBox="0 0 14 12"><path d="M0 2.5H4L2 5Z" fill="#333"/><path d="M5 1.5H13M5 4.5H13M5 7.5H13M5 10.5H13" stroke="#333" stroke-width="1"/><path d="M5 0.5V11" stroke="#555"/></svg>
<div class="a" style="left:1702px;top:219px;width:197px;height:193px;background:#fff;border-left:1px solid #888"></div>
<div class="a" style="left:1734px;top:220px;width:1px;height:33px;background:#111"></div>
<div class="a" style="left:1766px;top:220px;width:1px;height:33px;background:#111"></div>
<div class="a" style="left:1798px;top:220px;width:1px;height:33px;background:#111"></div>
<div class="a" style="left:1830px;top:220px;width:1px;height:33px;background:#111"></div>
<div class="a" style="left:1862px;top:220px;width:1px;height:33px;background:#111"></div>
<div class="a" style="left:1894px;top:220px;width:1px;height:33px;background:#111"></div>
<div class="a" style="left:1702px;top:252px;width:197px;height:1px;background:#111"></div>
<svg class="a" style="left:1702px;top:220px;" width="197" height="33" viewBox="0 0 197 33"><path d="M14 16H18" stroke="#111"/><ellipse cx="48" cy="16" rx="3" ry="1.8" fill="#111"/><path d="M80 13V19" stroke="#999"/><circle cx="112" cy="16" r="1.3" fill="#111"/><circle cx="144" cy="16" r="3.5" fill="#111"/><circle cx="176" cy="16" r="7.5" fill="#111"/></svg>
<div class="a" style="left:1708px;top:267px;width:149px;height:3px;background:#111"></div>
<div class="t" style="left:1863px;top:264px;font-size:10px;color:#111;font-weight:normal;">Einfach</div>
<div class="a" style="left:1702px;top:284px;width:197px;height:1px;background:#111"></div>
<div class="a" style="left:1702px;top:316px;width:197px;height:1px;background:#111"></div>
<div class="a" style="left:1702px;top:348px;width:197px;height:1px;background:#111"></div>
<div class="a" style="left:1702px;top:380px;width:197px;height:1px;background:#111"></div>
<div class="a" style="left:1702px;top:412px;width:197px;height:1px;background:#111"></div>
<svg class="a" style="left:1702px;top:284px;" width="197" height="128" viewBox="0 0 197 128"><path d="M8 16.5C30 15 60 17.5 100 16C140 14.5 160 17 190 15.5L190 17C160 18 140 18 100 18C60 18.5 30 18 8 17.5Z" stroke="#111" stroke-width="1.6" fill="#111"/>
<path d="M6 48C30 44 50 43.5 100 43.5C150 43.5 170 44 191 48C170 52 150 52.5 100 52.5C50 52.5 30 52 6 48Z" fill="#111"/>
<path d="M7 80C40 77 70 77 95 78C100 76 110 73 125 74C140 72 165 70 180 75C188 79 190 84 189 88C182 82 165 82 150 83C130 84 115 85 110 86C112 89 108 92 100 90C95 88 92 84 85 82C60 81 30 81 7 82Z" fill="#111"/>
<path d="M11 128V113C11 110 13 107.8 16 107.8H31.3V115H17.4V128Z" fill="#c8202a" stroke="#5a1010" stroke-width=".8"/>
<path d="M33 108.6H63.2V116H33Z M64.8 108.6H95.9V116H64.8Z" fill="#c8202a" stroke="#5a1010" stroke-width=".8"/>
<path d="M97.5 108.6H110.6V97H116.3V113C116.3 116 114.5 117.6 112 117.6H97.5Z" fill="#c8202a" stroke="#5a1010" stroke-width=".8"/>
<path d="M129.4 108.6H169.5V100.4L190.7 112.3L169.5 124.6V116H129.4Z" fill="#c8202a" stroke="#5a1010" stroke-width=".8"/>
<path d="M32 96V102M64 96V102M96 96V102M128 96V102M160 96V102M32 122V128M64 122V128M96 122V128M128 122V128M160 122V128" stroke="#111"/></svg>
<div class="a" style="left:1899px;top:219px;width:14px;height:193px;background:#e8e8e8"></div>
<svg class="a" style="left:1901px;top:224px;" width="10" height="7" viewBox="0 0 10 7"><path d="M1 6L5 1.5L9 6Z" fill="#333"/></svg>
<div class="a" style="left:1899px;top:239px;width:13px;height:15px;background:linear-gradient(90deg,#fafafa,#d0d0d0);border:1px solid #999"></div>
<svg class="a" style="left:1901px;top:401px;" width="10" height="7" viewBox="0 0 10 7"><path d="M1 1L5 5.5L9 1Z" fill="#333"/></svg>
<div class="a" style="left:1702px;top:412px;width:213px;height:18px;background:#d6d6d6"></div>
<svg class="a" style="left:1711px;top:414px;" width="20" height="14" viewBox="0 0 20 14"><rect x="1.5" y="1.5" width="9" height="8" fill="#ddd" stroke="#222"/><rect x="4.5" y="4.5" width="9" height="8" fill="#fff" stroke="#222"/><path d="M15 12L17 10V12Z" fill="#111"/></svg>
<svg class="a" style="left:1777px;top:415px;" width="15" height="11" viewBox="0 0 15 11"><path d="M2 1L13 10M13 1L2 10" stroke="#aaa" stroke-width="2.2"/></svg>
<svg class="a" style="left:1803px;top:415px;" width="26" height="11" viewBox="0 0 26 11"><path d="M2 10L10 1" stroke="#aaa" stroke-width="2"/><path d="M12 3H24M12 7H24" stroke="#aaa" stroke-width="1.5"/></svg>
<svg class="a" style="left:1847px;top:414px;" width="12" height="12" viewBox="0 0 12 12"><rect x="0.5" y="0.5" width="10" height="10" fill="#fff" stroke="#222"/><rect x="1" y="5" width="5" height="5" fill="#333"/></svg>
<svg class="a" style="left:1878px;top:413px;" width="11" height="13" viewBox="0 0 11 13"><path d="M1 3H10M3 3V12H8V3M4 1H7" stroke="#222" stroke-width="1.3" fill="#fff"/></svg>
<div class="a" style="left:1702px;top:430px;width:213px;height:3px;background:#2c2c2c"></div>
<div class="a" style="left:1702px;top:433px;width:213px;height:16px;background:linear-gradient(#a8a8a8,#909090);border-bottom:1px solid #6a6a6a"></div>
<div class="a" style="left:1702px;top:433px;width:46px;height:17px;background:linear-gradient(#e6e6e6,#d6d6d6)"></div>
<div class="t" style="left:1709px;top:436px;font-size:10.2px;color:#2a2a2a;font-weight:normal;">Ebenen</div>
<div class="a" style="left:1748px;top:433px;width:51px;height:16px;background:linear-gradient(#a6a6a6,#8e8e8e);border-right:1px solid #7a7a7a;border-left:1px solid #b4b4b4"></div>
<div class="t" style="left:1755px;top:436px;font-size:10.2px;color:#3a3a3a;font-weight:normal;">Zeichen</div>
<div class="a" style="left:1799px;top:433px;width:46px;height:16px;background:linear-gradient(#a6a6a6,#8e8e8e);border-right:1px solid #7a7a7a;border-left:1px solid #b4b4b4"></div>
<div class="t" style="left:1806px;top:436px;font-size:10.2px;color:#3a3a3a;font-weight:normal;">Absatz</div>
<svg class="a" style="left:1899px;top:437px;" width="14" height="12" viewBox="0 0 14 12"><path d="M0 2.5H4L2 5Z" fill="#333"/><path d="M5 1.5H13M5 4.5H13M5 7.5H13M5 10.5H13" stroke="#333" stroke-width="1"/><path d="M5 0.5V11" stroke="#555"/></svg>
<div class="a" style="left:1702px;top:450px;width:197px;height:192px;background:#d6d6d6"></div>
<div class="a" style="left:1703px;top:452px;width:44px;height:19px;background:#d8d8d8;border-bottom:1px solid #bbb"></div>
<div class="a" style="left:1704px;top:453px;width:14px;height:17px;background:#e6e6e6;border:1px solid #c8c8c8"></div>
<svg class="a" style="left:1705px;top:456px;" width="13" height="10" viewBox="0 0 13 10"><ellipse cx="6.5" cy="5" rx="6" ry="3.6" fill="#fff" stroke="#333" stroke-width="1.3"/><circle cx="6.5" cy="5" r="2.6" fill="#111"/><circle cx="5.5" cy="4" r=".8" fill="#fff"/></svg>
<div class="a" style="left:1722px;top:453px;width:14px;height:17px;background:#e0e0e0;border:1px solid #c8c8c8"></div>
<div class="a" style="left:1739px;top:454px;width:4px;height:16px;background:#1a8a3a"></div>
<div class="a" style="left:1747px;top:452px;width:1px;height:20px;background:#111"></div>
<div class="a" style="left:1748px;top:452px;width:151px;height:20px;background:#d6d6d6"></div>
<div class="a" style="left:1763px;top:452px;width:134px;height:20px;background:#3d8ff0"></div>
<svg class="a" style="left:1752px;top:458px;" width="10" height="7" viewBox="0 0 10 7"><path d="M0.5 0.5H9L4.75 6Z" fill="none" stroke="#888"/></svg>
<svg class="a" style="left:1893px;top:452px;" width="4" height="4" viewBox="0 0 4 4"><path d="M0 0H4V4Z" fill="#111"/></svg>
<div class="a" style="left:1765px;top:454px;width:16px;height:16px;background:radial-gradient(#a8d4f4,#5aa0d8);border:1px solid #111"></div>
<div class="t" style="left:1786px;top:457px;font-size:10.2px;color:#fff;font-weight:bold;-webkit-text-stroke:0;">Meine Ebene</div>
<svg class="a" style="left:1872px;top:456px;" width="12" height="12" viewBox="0 0 12 12"><circle cx="6" cy="6" r="4.5" fill="none" stroke="#1a3a7a" stroke-width="1.2"/></svg>
<div class="a" style="left:1888px;top:459px;width:5px;height:5px;background:#1a8a3a"></div>
<div class="a" style="left:1703px;top:472px;width:44px;height:19px;background:#d8d8d8;border-bottom:1px solid #bbb"></div>
<div class="a" style="left:1704px;top:473px;width:14px;height:17px;background:#e6e6e6;border:1px solid #c8c8c8"></div>
<svg class="a" style="left:1705px;top:476px;" width="13" height="10" viewBox="0 0 13 10"><ellipse cx="6.5" cy="5" rx="6" ry="3.6" fill="#fff" stroke="#333" stroke-width="1.3"/><circle cx="6.5" cy="5" r="2.6" fill="#111"/><circle cx="5.5" cy="4" r=".8" fill="#fff"/></svg>
<div class="a" style="left:1722px;top:473px;width:14px;height:17px;background:#e0e0e0;border:1px solid #c8c8c8"></div>
<div class="a" style="left:1739px;top:474px;width:4px;height:16px;background:#1a8a3a"></div>
<div class="a" style="left:1747px;top:472px;width:1px;height:20px;background:#111"></div>
<div class="a" style="left:1748px;top:472px;width:151px;height:20px;background:#d6d6d6"></div>
<div class="a" style="left:1780px;top:472px;width:119px;height:20px;background:#fff;border-bottom:1px solid #cfcfcf"></div>
<div class="a" style="left:1780px;top:474px;width:16px;height:16px;background:#c4b68a;border:1px solid #111;box-shadow:inset 0 0 0 1px #fff"></div>
<div class="t" style="left:1801px;top:477px;font-size:10.2px;color:#111;font-weight:normal;">&lt;Verknüpfte ...</div>
<svg class="a" style="left:1871px;top:475px;" width="14" height="14" viewBox="0 0 14 14"><circle cx="7" cy="7" r="6" fill="#ccc" stroke="#333"/><circle cx="7" cy="7" r="3.5" fill="#444"/><circle cx="7" cy="7" r="5" fill="none" stroke="#fff" stroke-width=".8"/></svg>
<div class="a" style="left:1888px;top:477px;width:8px;height:8px;background:#1a7a3a;border:1px solid #111"></div>
<div class="a" style="left:1703px;top:492px;width:44px;height:19px;background:#d8d8d8;border-bottom:1px solid #bbb"></div>
<div class="a" style="left:1704px;top:493px;width:14px;height:17px;background:#e6e6e6;border:1px solid #c8c8c8"></div>
<svg class="a" style="left:1705px;top:496px;" width="13" height="10" viewBox="0 0 13 10"><ellipse cx="6.5" cy="5" rx="6" ry="3.6" fill="#fff" stroke="#333" stroke-width="1.3"/><circle cx="6.5" cy="5" r="2.6" fill="#111"/><circle cx="5.5" cy="4" r=".8" fill="#fff"/></svg>
<div class="a" style="left:1722px;top:493px;width:14px;height:17px;background:#e0e0e0;border:1px solid #c8c8c8"></div>
<div class="a" style="left:1739px;top:494px;width:4px;height:16px;background:#1a8a3a"></div>
<div class="a" style="left:1747px;top:492px;width:1px;height:20px;background:#111"></div>
<div class="a" style="left:1748px;top:492px;width:151px;height:20px;background:#d6d6d6"></div>
<div class="a" style="left:1780px;top:492px;width:119px;height:20px;background:#fff;border-bottom:1px solid #cfcfcf"></div>
<div class="a" style="left:1780px;top:494px;width:16px;height:16px;background:radial-gradient(#98ccf0,#4a94d4);border:1px solid #111;box-shadow:inset 0 0 0 1px #fff"></div>
<div class="t" style="left:1801px;top:497px;font-size:10.2px;color:#111;font-weight:normal;">&lt;Pfad&gt;</div>
<svg class="a" style="left:1872px;top:496px;" width="12" height="12" viewBox="0 0 12 12"><circle cx="6" cy="6" r="4.5" fill="none" stroke="#333" stroke-width="1.2"/></svg>
<div class="a" style="left:1703px;top:512px;width:44px;height:19px;background:#d8d8d8;border-bottom:1px solid #bbb"></div>
<div class="a" style="left:1704px;top:513px;width:14px;height:17px;background:#e6e6e6;border:1px solid #c8c8c8"></div>
<svg class="a" style="left:1705px;top:516px;" width="13" height="10" viewBox="0 0 13 10"><ellipse cx="6.5" cy="5" rx="6" ry="3.6" fill="#fff" stroke="#333" stroke-width="1.3"/><circle cx="6.5" cy="5" r="2.6" fill="#111"/><circle cx="5.5" cy="4" r=".8" fill="#fff"/></svg>
<div class="a" style="left:1722px;top:513px;width:14px;height:17px;background:#e0e0e0;border:1px solid #c8c8c8"></div>
<div class="a" style="left:1739px;top:514px;width:4px;height:16px;background:#1a8a3a"></div>
<div class="a" style="left:1747px;top:512px;width:1px;height:20px;background:#111"></div>
<div class="a" style="left:1748px;top:512px;width:151px;height:20px;background:#d6d6d6"></div>
<div class="a" style="left:1780px;top:512px;width:119px;height:20px;background:#fff;border-bottom:1px solid #cfcfcf"></div>
<div class="a" style="left:1780px;top:514px;width:16px;height:16px;background:#e06428;border:1px solid #111"></div>
<div class="t" style="left:1801px;top:517px;font-size:10.2px;color:#111;font-weight:normal;">&lt;Pfad&gt;</div>
<svg class="a" style="left:1872px;top:516px;" width="12" height="12" viewBox="0 0 12 12"><circle cx="6" cy="6" r="4.5" fill="none" stroke="#333" stroke-width="1.2"/></svg>
<div class="a" style="left:1703px;top:532px;width:44px;height:19px;background:#d8d8d8;border-bottom:1px solid #bbb"></div>
<div class="a" style="left:1704px;top:533px;width:14px;height:17px;background:#e6e6e6;border:1px solid #c8c8c8"></div>
<svg class="a" style="left:1705px;top:536px;" width="13" height="10" viewBox="0 0 13 10"><ellipse cx="6.5" cy="5" rx="6" ry="3.6" fill="#fff" stroke="#333" stroke-width="1.3"/><circle cx="6.5" cy="5" r="2.6" fill="#111"/><circle cx="5.5" cy="4" r=".8" fill="#fff"/></svg>
<div class="a" style="left:1722px;top:533px;width:14px;height:17px;background:#e0e0e0;border:1px solid #c8c8c8"></div>
<svg class="a" style="left:1724px;top:535px;" width="10" height="13" viewBox="0 0 10 13"><path d="M2.5 6V4C2.5 1 7.5 1 7.5 4V6" stroke="#222" stroke-width="1.6" fill="none"/><rect x="1" y="6" width="8" height="7" rx="1" fill="#333"/></svg>
<div class="a" style="left:1739px;top:534px;width:4px;height:16px;background:#e86820"></div>
<div class="a" style="left:1747px;top:532px;width:1px;height:20px;background:#111"></div>
<div class="a" style="left:1748px;top:532px;width:151px;height:20px;background:#d2d2d2;border-bottom:1px solid #c0c0c0"></div>
<svg class="a" style="left:1752px;top:536px;" width="7" height="12" viewBox="0 0 7 12"><path d="M0.5 0.5L6 6L0.5 11.5Z" fill="none" stroke="#888"/></svg>
<div class="a" style="left:1765px;top:534px;width:16px;height:16px;background:#fff;border:1px solid #111"></div>
<div class="a" style="left:1770px;top:540px;width:1px;height:1px;background:#555"></div>
<div class="t" style="left:1785px;top:537px;font-size:10.2px;color:#111;font-weight:normal;">Vorlage Vorderseite</div>
<svg class="a" style="left:1872px;top:536px;" width="12" height="12" viewBox="0 0 12 12"><circle cx="6" cy="6" r="4.5" fill="none" stroke="#333" stroke-width="1.2"/></svg>
<div class="a" style="left:1703px;top:552px;width:44px;height:19px;background:#d8d8d8;border-bottom:1px solid #bbb"></div>
<div class="a" style="left:1704px;top:553px;width:14px;height:17px;background:#e6e6e6;border:1px solid #c8c8c8"></div>
<svg class="a" style="left:1705px;top:556px;" width="13" height="10" viewBox="0 0 13 10"><ellipse cx="6.5" cy="5" rx="6" ry="3.6" fill="#fff" stroke="#333" stroke-width="1.3"/><circle cx="6.5" cy="5" r="2.6" fill="#111"/><circle cx="5.5" cy="4" r=".8" fill="#fff"/></svg>
<div class="a" style="left:1722px;top:553px;width:14px;height:17px;background:#e0e0e0;border:1px solid #c8c8c8"></div>
<svg class="a" style="left:1724px;top:555px;" width="10" height="13" viewBox="0 0 10 13"><path d="M2.5 6V4C2.5 1 7.5 1 7.5 4V6" stroke="#222" stroke-width="1.6" fill="none"/><rect x="1" y="6" width="8" height="7" rx="1" fill="#333"/></svg>
<div class="a" style="left:1739px;top:554px;width:4px;height:16px;background:#e86820"></div>
<div class="a" style="left:1747px;top:552px;width:1px;height:20px;background:#111"></div>
<div class="a" style="left:1748px;top:552px;width:151px;height:20px;background:#d2d2d2;border-bottom:1px solid #c0c0c0"></div>
<svg class="a" style="left:1752px;top:556px;" width="7" height="12" viewBox="0 0 7 12"><path d="M0.5 0.5L6 6L0.5 11.5Z" fill="none" stroke="#888"/></svg>
<div class="a" style="left:1765px;top:554px;width:16px;height:16px;background:#fff;border:1px solid #111"></div>
<div class="a" style="left:1770px;top:560px;width:1px;height:1px;background:#555"></div>
<div class="t" style="left:1785px;top:557px;font-size:10.2px;color:#111;font-weight:normal;">Vorlage Rückseite</div>
<svg class="a" style="left:1872px;top:556px;" width="12" height="12" viewBox="0 0 12 12"><circle cx="6" cy="6" r="4.5" fill="none" stroke="#333" stroke-width="1.2"/></svg>
<div class="a" style="left:1702px;top:571px;width:197px;height:1px;background:#222"></div>
<div class="a" style="left:1899px;top:450px;width:14px;height:192px;background:#e4e4e4"></div>
<svg class="a" style="left:1901px;top:456px;" width="10" height="7" viewBox="0 0 10 7"><path d="M1 6L5 1.5L9 6Z" fill="#aaa"/></svg>
<svg class="a" style="left:1901px;top:631px;" width="10" height="7" viewBox="0 0 10 7"><path d="M1 1L5 5.5L9 1Z" fill="#aaa"/></svg>
<div class="a" style="left:1702px;top:642px;width:213px;height:19px;background:#d6d6d6;border-top:1px solid #aaa"></div>
<div class="t" style="left:1712px;top:646px;font-size:10.2px;color:#222;font-weight:normal;">3 Ebenen</div>
<svg class="a" style="left:1783px;top:645px;" width="13" height="13" viewBox="0 0 13 13"><circle cx="6.5" cy="6.5" r="5" fill="#eee" stroke="#999"/><path d="M6.5 2V6.5L9 9" stroke="#555"/></svg>
<svg class="a" style="left:1811px;top:645px;" width="16" height="13" viewBox="0 0 16 13"><path d="M1 6H9M6 3L9 6L6 9" stroke="#222" stroke-width="1.4" fill="none"/><rect x="9.5" y="4.5" width="6" height="8" fill="#fff" stroke="#222"/></svg>
<svg class="a" style="left:1846px;top:645px;" width="11" height="12" viewBox="0 0 11 12"><rect x="0.5" y="0.5" width="10" height="11" fill="#fff" stroke="#222"/><rect x="5" y="5" width="5" height="6" fill="#333"/></svg>
<svg class="a" style="left:1878px;top:644px;" width="11" height="14" viewBox="0 0 11 14"><path d="M1 3H10M3 3V13H8V3M4 1H7" stroke="#222" stroke-width="1.3" fill="#fff"/></svg>
<div class="a" style="left:1702px;top:661px;width:213px;height:3px;background:#2c2c2c"></div>
<div class="a" style="left:1702px;top:664px;width:213px;height:16px;background:linear-gradient(#a8a8a8,#909090);border-bottom:1px solid #6a6a6a"></div>
<div class="a" style="left:1702px;top:664px;width:56px;height:16px;background:linear-gradient(#a6a6a6,#8e8e8e);border-right:1px solid #7a7a7a;border-left:1px solid #b4b4b4"></div>
<div class="t" style="left:1708px;top:667px;font-size:10.2px;color:#3a3a3a;font-weight:normal;">Aussehen</div>
<div class="a" style="left:1758px;top:664px;width:63px;height:17px;background:linear-gradient(#e6e6e6,#d6d6d6)"></div>
<svg class="a" style="left:1764px;top:667px;" width="6" height="8" viewBox="0 0 6 8"><path d="M0.5 3L3 0.5L5.5 3M0.5 5L3 7.5L5.5 5" fill="none" stroke="#333" stroke-width="1.3"/></svg>
<div class="t" style="left:1773px;top:667px;font-size:10.2px;color:#2a2a2a;font-weight:normal;">Verlauf</div>
<svg class="a" style="left:1899px;top:668px;" width="14" height="12" viewBox="0 0 14 12"><path d="M0 2.5H4L2 5Z" fill="#333"/><path d="M5 1.5H13M5 4.5H13M5 7.5H13M5 10.5H13" stroke="#333" stroke-width="1"/><path d="M5 0.5V11" stroke="#555"/></svg>
<div class="a" style="left:1702px;top:681px;width:213px;height:212px;background:#d6d6d6"></div>
<div class="a" style="left:1709px;top:687px;width:28px;height:28px;background:radial-gradient(circle at 50% 50%,#8cc6ee,#3f8ed0);border:1px solid #111;box-shadow:inset 0 0 0 1px #fff"></div>
<div class="a" style="left:1739px;top:687px;width:7px;height:28px;background:linear-gradient(90deg,#fafafa,#ddd);border:1px solid #aaa"></div>
<svg class="a" style="left:1740px;top:698px;" width="6" height="5" viewBox="0 0 6 5"><path d="M0 0H5L2.5 4Z" fill="#111"/></svg>
<div class="t" style="left:1751px;top:693px;font-size:10.2px;color:#111;font-weight:normal;">Art:</div>
<div class="a" style="left:1771px;top:690px;width:122px;height:16px;background:#fff;border:1px solid #bbb"></div>
<div class="t" style="left:1774px;top:693px;font-size:10.2px;color:#111;font-weight:normal;">Kreisförmig</div>
<svg class="a" style="left:1880px;top:697px;" width="9" height="6" viewBox="0 0 9 6"><path d="M0 0H8L4 5Z" fill="#111"/></svg>
<svg class="a" style="left:1740px;top:654px;" width="165" height="66" viewBox="0 0 165 66"><path d="M21 7.5H82.5V32H157V58H8.5V32H21Z" fill="none" stroke="#f00" stroke-width="4.6" stroke-linejoin="round"/></svg>
<svg class="a" style="left:1714px;top:723px;" width="17" height="16" viewBox="0 0 17 16"><rect x="1" y="1" width="6" height="5" fill="#333"/><rect x="9" y="9" width="7" height="6" fill="#333"/><path d="M9 3H15L13 1M13 5L15 3M8 12H2L4 10M4 14L2 12" stroke="#111" stroke-width="1.2" fill="none"/></svg>
<svg class="a" style="left:1754px;top:725px;" width="11" height="10" viewBox="0 0 11 10"><path d="M0.5 9.5H10.5L5 1Z" fill="none" stroke="#222"/><path d="M4 9V6" stroke="#222"/></svg>
<div class="a" style="left:1769px;top:723px;width:44px;height:17px;background:#fff;border:1px solid #c0c0c0"></div>
<div class="a" style="left:1797px;top:724px;width:15px;height:15px;background:linear-gradient(90deg,#f4f4f4,#e2e2e2)"></div>
<svg class="a" style="left:1802px;top:728px;" width="5" height="8" viewBox="0 0 5 8"><path d="M0 0L4 4L0 8Z" fill="#222"/></svg>
<div class="t" style="left:1775px;top:727px;font-size:10.2px;color:#1a3a9a;font-weight:normal;">0</div>
<div class="t" style="left:1818px;top:721px;font-size:9px;color:#111;font-weight:normal;">°</div>
<svg class="a" style="left:1826px;top:723px;" width="17" height="17" viewBox="0 0 17 17"><path d="M3 1V15M1 3L3 1L5 3M1 13L3 15L5 13" stroke="#111" fill="none"/><ellipse cx="11" cy="7" rx="5" ry="3.5" fill="#ddd" stroke="#333"/><path d="M6 14H16" stroke="#555" stroke-dasharray="1 1"/></svg>
<div class="a" style="left:1844px;top:723px;width:48px;height:17px;background:#fff"></div>
<div class="t" style="left:1850px;top:727px;font-size:10.2px;color:#111;font-weight:normal;">100</div>
<div class="t" style="left:1893px;top:727px;font-size:10.2px;color:#111;font-weight:normal;">%</div>
<svg class="a" style="left:1810px;top:742px;" width="10" height="10" viewBox="0 0 10 10"><path d="M5 0.5L9.5 5L5 9.5L0.5 5Z" fill="#fff" stroke="#111"/><path d="M5 3L7 5L5 7L3 5Z" fill="#111"/></svg>
<div class="a" style="left:1711px;top:752px;width:167px;height:57px;background:linear-gradient(90deg,#88c8f2,#6cb0e4 50%,#4992cf);border:1px solid #111"></div>
<svg class="a" style="left:1884px;top:755px;" width="10" height="13" viewBox="0 0 10 13"><path d="M1 3H9M2.5 3V12H7.5V3M3.5 1H6.5" stroke="#aaa" stroke-width="1.2" fill="#eee"/></svg>
<svg class="a" style="left:1706px;top:809px;" width="11" height="14" viewBox="0 0 11 14"><path d="M5.5 0.5L10 4V13H1V4Z" fill="#fff" stroke="#333"/><rect x="2.5" y="5.5" width="6" height="6" fill="#8cc8f0" stroke="#333" stroke-width=".5"/></svg>
<svg class="a" style="left:1872px;top:809px;" width="11" height="14" viewBox="0 0 11 14"><path d="M5.5 0.5L10 4V13H1V4Z" fill="#fff" stroke="#333"/><rect x="2.5" y="5.5" width="6" height="6" fill="#4a90cc" stroke="#333" stroke-width=".5"/></svg>
<div class="t" style="left:1718px;top:838px;font-size:10.2px;color:#9a9a9a;font-weight:normal;">Deckkraft:</div>
<div class="a" style="left:1770px;top:834px;width:43px;height:17px;background:#d2d2d2;border:1px solid #bcbcbc"></div>
<svg class="a" style="left:1802px;top:838px;" width="5" height="8" viewBox="0 0 5 8"><path d="M0 0L4 4L0 8Z" fill="#aaa"/></svg>
<div class="t" style="left:1816px;top:838px;font-size:10.2px;color:#aaa;font-weight:normal;">%</div>
<div class="t" style="left:1728px;top:862px;font-size:10.2px;color:#111;font-weight:normal;">Position:</div>
<div class="a" style="left:1770px;top:858px;width:43px;height:17px;background:#fff;border:1px solid #c0c0c0"></div>
<div class="a" style="left:1797px;top:859px;width:15px;height:15px;background:linear-gradient(90deg,#f4f4f4,#e2e2e2)"></div>
<svg class="a" style="left:1802px;top:862px;" width="5" height="8" viewBox="0 0 5 8"><path d="M0 0L4 4L0 8Z" fill="#222"/></svg>
<div class="t" style="left:1774px;top:862px;font-size:10.2px;color:#111;font-weight:normal;">63,0:</div>
<div class="t" style="left:1816px;top:862px;font-size:10.2px;color:#111;font-weight:normal;">%</div>
<div class="a" style="left:1721px;top:854px;width:109px;height:26px;border:4px solid #f00;border-radius:2px"></div>
<div class="t" style="left:1624px;top:808px;font-size:18.5px;color:#e8141a;font-weight:bold;-webkit-text-stroke:0;letter-spacing:-0.6px">#7CCEF4</div>
<div class="t" style="left:1786px;top:808px;font-size:18.5px;color:#e8141a;font-weight:bold;-webkit-text-stroke:0;letter-spacing:-0.4px">#149CD1</div>
<div class="a" style="left:1702px;top:893px;width:213px;height:3px;background:#2c2c2c"></div>
<div class="a" style="left:1702px;top:896px;width:213px;height:17px;background:linear-gradient(#a8a8a8,#909090);border-bottom:1px solid #6a6a6a"></div>
<div class="a" style="left:1702px;top:896px;width:72px;height:18px;background:linear-gradient(#e6e6e6,#d6d6d6)"></div>
<svg class="a" style="left:1705px;top:899px;" width="6" height="8" viewBox="0 0 6 8"><path d="M0.5 3L3 0.5L5.5 3M0.5 5L3 7.5L5.5 5" fill="none" stroke="#333" stroke-width="1.3"/></svg>
<div class="t" style="left:1714px;top:900px;font-size:10.2px;color:#2a2a2a;font-weight:normal;">Ausrichten</div>
<div class="a" style="left:1774px;top:896px;width:64px;height:17px;background:linear-gradient(#a6a6a6,#8e8e8e);border-right:1px solid #7a7a7a;border-left:1px solid #b4b4b4"></div>
<div class="t" style="left:1782px;top:900px;font-size:10.2px;color:#3a3a3a;font-weight:normal;">Pathfinder</div>
<svg class="a" style="left:1899px;top:900px;" width="14" height="12" viewBox="0 0 14 12"><path d="M0 2.5H4L2 5Z" fill="#333"/><path d="M5 1.5H13M5 4.5H13M5 7.5H13M5 10.5H13" stroke="#333" stroke-width="1"/><path d="M5 0.5V11" stroke="#555"/></svg>
<div class="a" style="left:1702px;top:914px;width:213px;height:121px;background:#d6d6d6"></div>
<div class="t" style="left:1706px;top:919px;font-size:10.2px;color:#111;font-weight:normal;">Objekte ausrichten:</div>
<svg class="a" style="left:1712px;top:932px;" width="18" height="15" viewBox="0 0 18 15"><path d="M1 0V15" stroke="#111" stroke-width="1.5"/><rect x="2.5" y="1.5" width="6" height="5" fill="#fff" stroke="#111"/><rect x="2.5" y="8.5" width="12" height="5" fill="#bbb" stroke="#111"/></svg>
<svg class="a" style="left:1747px;top:932px;" width="18" height="15" viewBox="0 0 18 15"><path d="M7.5 0V15" stroke="#111"/><rect x="4.5" y="1.5" width="6" height="5" fill="#fff" stroke="#111"/><rect x="1.5" y="8.5" width="12" height="5" fill="#bbb" stroke="#111"/></svg>
<svg class="a" style="left:1781px;top:932px;" width="18" height="15" viewBox="0 0 18 15"><path d="M14 0V15" stroke="#111" stroke-width="1.5"/><rect x="6.5" y="1.5" width="6" height="5" fill="#fff" stroke="#111"/><rect x="0.5" y="8.5" width="12" height="5" fill="#bbb" stroke="#111"/></svg>
<svg class="a" style="left:1814px;top:932px;" width="18" height="15" viewBox="0 0 18 15"><path d="M0 1H18" stroke="#111" stroke-width="1.5"/><rect x="2.5" y="3.5" width="5" height="10" fill="#bbb" stroke="#111"/><rect x="10.5" y="3.5" width="5" height="5" fill="#fff" stroke="#111"/></svg>
<svg class="a" style="left:1848px;top:932px;" width="18" height="15" viewBox="0 0 18 15"><path d="M0 7.5H18" stroke="#111"/><rect x="3.5" y="2.5" width="5" height="10" fill="#bbb" stroke="#111"/><rect x="10.5" y="5.5" width="5" height="5" fill="#fff" stroke="#111"/></svg>
<svg class="a" style="left:1881px;top:932px;" width="18" height="15" viewBox="0 0 18 15"><path d="M0 14H18" stroke="#111" stroke-width="1.5"/><rect x="2.5" y="1.5" width="5" height="11" fill="#bbb" stroke="#111"/><rect x="10.5" y="6.5" width="5" height="6" fill="#fff" stroke="#111"/></svg>
<div class="a" style="left:1706px;top:952px;width:200px;height:1px;background:#bdbdbd;border-bottom:1px solid #f0f0f0"></div>
<div class="t" style="left:1706px;top:957px;font-size:10.2px;color:#111;font-weight:normal;">Objekte verteilen:</div>
<svg class="a" style="left:1712px;top:970px;" width="18" height="15" viewBox="0 0 18 15"><path d="M0 1H17M0 13H17" stroke="#111" stroke-width="1.3"/><rect x="4.5" y="3.5" width="8" height="4" fill="#fff" stroke="#111"/><rect x="2.5" y="8.5" width="12" height="4" fill="#bbb" stroke="#111"/></svg>
<svg class="a" style="left:1746px;top:970px;" width="18" height="15" viewBox="0 0 18 15"><path d="M0 4H17M0 10H17" stroke="#111" stroke-width="1.3"/><rect x="4.5" y="1.5" width="8" height="4" fill="#fff" stroke="#111"/><rect x="2.5" y="8.5" width="12" height="4" fill="#bbb" stroke="#111"/></svg>
<svg class="a" style="left:1780px;top:970px;" width="18" height="15" viewBox="0 0 18 15"><path d="M0 7H17M0 13H17" stroke="#111" stroke-width="1.3"/><rect x="4.5" y="1.5" width="8" height="4" fill="#fff" stroke="#111"/><rect x="2.5" y="8.5" width="12" height="4" fill="#bbb" stroke="#111"/></svg>
<svg class="a" style="left:1814px;top:970px;" width="18" height="15" viewBox="0 0 18 15"><path d="M1 0V14M6 0V14" stroke="#111" stroke-width="1.3"/><rect x="2.5" y="2.5" width="3" height="10" fill="#bbb" stroke="#111"/><rect x="7.5" y="4.5" width="4" height="6" fill="#fff" stroke="#111"/></svg>
<svg class="a" style="left:1848px;top:970px;" width="18" height="15" viewBox="0 0 18 15"><path d="M4 0V14M11 0V14" stroke="#111" stroke-width="1.3"/><rect x="1.5" y="2.5" width="4" height="10" fill="#bbb" stroke="#111"/><rect x="9.5" y="4.5" width="4" height="6" fill="#fff" stroke="#111"/></svg>
<svg class="a" style="left:1881px;top:970px;" width="18" height="15" viewBox="0 0 18 15"><path d="M7 0V14M14 0V14" stroke="#111" stroke-width="1.3"/><rect x="2.5" y="2.5" width="4" height="10" fill="#bbb" stroke="#111"/><rect x="9.5" y="4.5" width="4" height="6" fill="#fff" stroke="#111"/></svg>
<div class="a" style="left:1706px;top:989px;width:200px;height:1px;background:#bdbdbd;border-bottom:1px solid #f0f0f0"></div>
<div class="t" style="left:1707px;top:995px;font-size:10.2px;color:#111;font-weight:normal;">Abstand verteilen:</div>
<div class="t" style="left:1841px;top:997px;font-size:10.2px;color:#111;font-weight:normal;">Ausrichten an:</div>
<div class="a" style="left:1835px;top:996px;width:1px;height:28px;background:#b0b0b0;border-right:1px solid #eee"></div>
<svg class="a" style="left:1712px;top:1009px;" width="19" height="15" viewBox="0 0 19 15"><rect x="8.5" y="0.5" width="8" height="5" fill="#bbb" stroke="#111"/><path d="M0 7H18M0 9H18" stroke="#111" stroke-width="1.2"/><rect x="8.5" y="10.5" width="5" height="4" fill="#fff" stroke="#111"/></svg>
<svg class="a" style="left:1746px;top:1009px;" width="17" height="15" viewBox="0 0 17 15"><rect x="0.5" y="1.5" width="4" height="5" fill="#fff" stroke="#111"/><path d="M7 1V14M9 1V14" stroke="#111" stroke-width="1.2"/><rect x="11.5" y="3.5" width="4" height="10" fill="#bbb" stroke="#111"/></svg>
<div class="a" style="left:1776px;top:1008px;width:54px;height:20px;background:#d8d8d8;border:1px solid #f2f2f2;box-shadow:inset 0 0 0 1px #c4c4c4"></div>
<div class="a" style="left:1777px;top:1009px;width:14px;height:18px;border-right:1px solid #c4c4c4"></div>
<svg class="a" style="left:1779px;top:1011px;" width="9" height="14" viewBox="0 0 9 14"><path d="M1 5L4.5 1L8 5M1 9L4.5 13L8 9" fill="none" stroke="#aaa"/></svg>
<svg class="a" style="left:1861px;top:1009px;" width="24" height="16" viewBox="0 0 24 16"><rect x="1.5" y="1.5" width="12" height="13" fill="#fff" stroke="#111" stroke-width="1.5"/><rect x="4.5" y="4.5" width="6" height="7" fill="#bbb" stroke="#111"/><path d="M1 7.5H14M7.5 1V15" stroke="#111"/><path d="M18 6H23L20.5 10Z" fill="#111"/></svg>
<div class="a" style="left:1700px;top:1035px;width:215px;height:1px;background:#333"></div>
<div class="a" style="left:1422px;top:142px;width:216px;height:132px;background:#d6d6d6;border:1px solid #3a3a3a;box-shadow:0 0 3px rgba(0,0,0,.15)"></div>
<div class="a" style="left:1423px;top:143px;width:214px;height:12px;background:linear-gradient(#5c5c5c,#3a3a3a 60%,#2c2c2c)"></div>
<svg class="a" style="left:1610px;top:145px;" width="26" height="9" viewBox="0 0 26 9"><path d="M3.5 0.5L0.5 3.5L3.5 6.5ZM7.5 0.5L4.5 3.5L7.5 6.5Z" fill="#ddd"/><path d="M12.5 0V8" stroke="#777"/><path d="M17 1L22 6M22 1L17 6" stroke="#ddd" stroke-width="1.5"/></svg>
<div class="a" style="left:1423px;top:155px;width:214px;height:17px;background:linear-gradient(#a4a4a4,#8e8e8e);border-bottom:1px solid #6a6a6a"></div>
<div class="a" style="left:1423px;top:155px;width:80px;height:18px;background:linear-gradient(#e4e4e4,#d6d6d6)"></div>
<svg class="a" style="left:1427px;top:160px;" width="6" height="8" viewBox="0 0 6 8"><path d="M0.5 3L3 0.5L5.5 3M0.5 5L3 7.5L5.5 5" fill="none" stroke="#333" stroke-width="1.3"/></svg>
<div class="t" style="left:1435px;top:159px;font-size:10.2px;color:#222;font-weight:normal;">Transparenz</div>
<svg class="a" style="left:1620px;top:158px;" width="14" height="12" viewBox="0 0 14 12"><path d="M0 2.5H4L2 5Z" fill="#333"/><path d="M5 1.5H13M5 4.5H13M5 7.5H13M5 10.5H13" stroke="#333" stroke-width="1"/></svg>
<div class="a" style="left:1431px;top:178px;width:95px;height:16px;background:#fff;border:1px solid #c8c8c8"></div>
<div class="a" style="left:1505px;top:179px;width:20px;height:14px;background:#fafafa;border-left:1px solid #ddd"></div>
<div class="t" style="left:1434px;top:182px;font-size:10.2px;color:#111;font-weight:normal;">Weiches Licht</div>
<svg class="a" style="left:1512px;top:186px;" width="9" height="6" viewBox="0 0 9 6"><path d="M0 0H8L4 5Z" fill="#111"/></svg>
<div class="t" style="left:1530px;top:182px;font-size:10.2px;color:#111;font-weight:normal;">Deckkr.:</div>
<div class="a" style="left:1574px;top:178px;width:45px;height:17px;background:#fff;border:1px solid #c8c8c8"></div>
<div class="a" style="left:1603px;top:179px;width:15px;height:15px;background:linear-gradient(90deg,#f4f4f4,#e2e2e2)"></div>
<svg class="a" style="left:1608px;top:182px;" width="5" height="8" viewBox="0 0 5 8"><path d="M0 0L4 4L0 8Z" fill="#222"/></svg>
<div class="t" style="left:1579px;top:182px;font-size:10.2px;color:#111;font-weight:normal;">100</div>
<div class="t" style="left:1620px;top:182px;font-size:10.2px;color:#111;font-weight:normal;">%</div>
<div class="a" style="left:1428px;top:200px;width:202px;height:1px;background:#bcbcbc;border-bottom:1px solid #eee"></div>
<div class="a" style="left:1428px;top:207px;width:121px;height:56px;background:#d4d4d4;border:1px solid #f0f0f0;box-shadow:inset 0 0 0 1px #c6c6c6"></div>
<div class="a" style="left:1433px;top:210px;width:51px;height:50px;background:#fff;border:2px solid #111"></div>
<svg class="a" style="left:1440px;top:212px;" width="36" height="46" viewBox="0 0 36 46"><rect width="36" height="46" fill="#d6c99d" filter="url(#tex)"/></svg>
<div class="a" style="left:1555px;top:221px;width:13px;height:12px;background:linear-gradient(#fff,#ececec);border:1px solid #c4c4c4"></div>
<div class="a" style="left:1555px;top:238px;width:13px;height:12px;background:linear-gradient(#fff,#ececec);border:1px solid #c4c4c4"></div>
<div class="t" style="left:1571px;top:223px;font-size:10.2px;color:#8a8a8a;font-weight:normal;">Maskieren</div>
<div class="t" style="left:1571px;top:240px;font-size:10.2px;color:#8a8a8a;font-weight:normal;">Umkehren</div>
<svg class="a" style="left:1418px;top:150px;" width="116" height="52" viewBox="0 0 116 52"><path d="M5.5 4.5H87.5V22.5H110.5V47.5H5.5Z" fill="none" stroke="#f00" stroke-width="4.5" stroke-linejoin="round"/></svg>
</body></html>
